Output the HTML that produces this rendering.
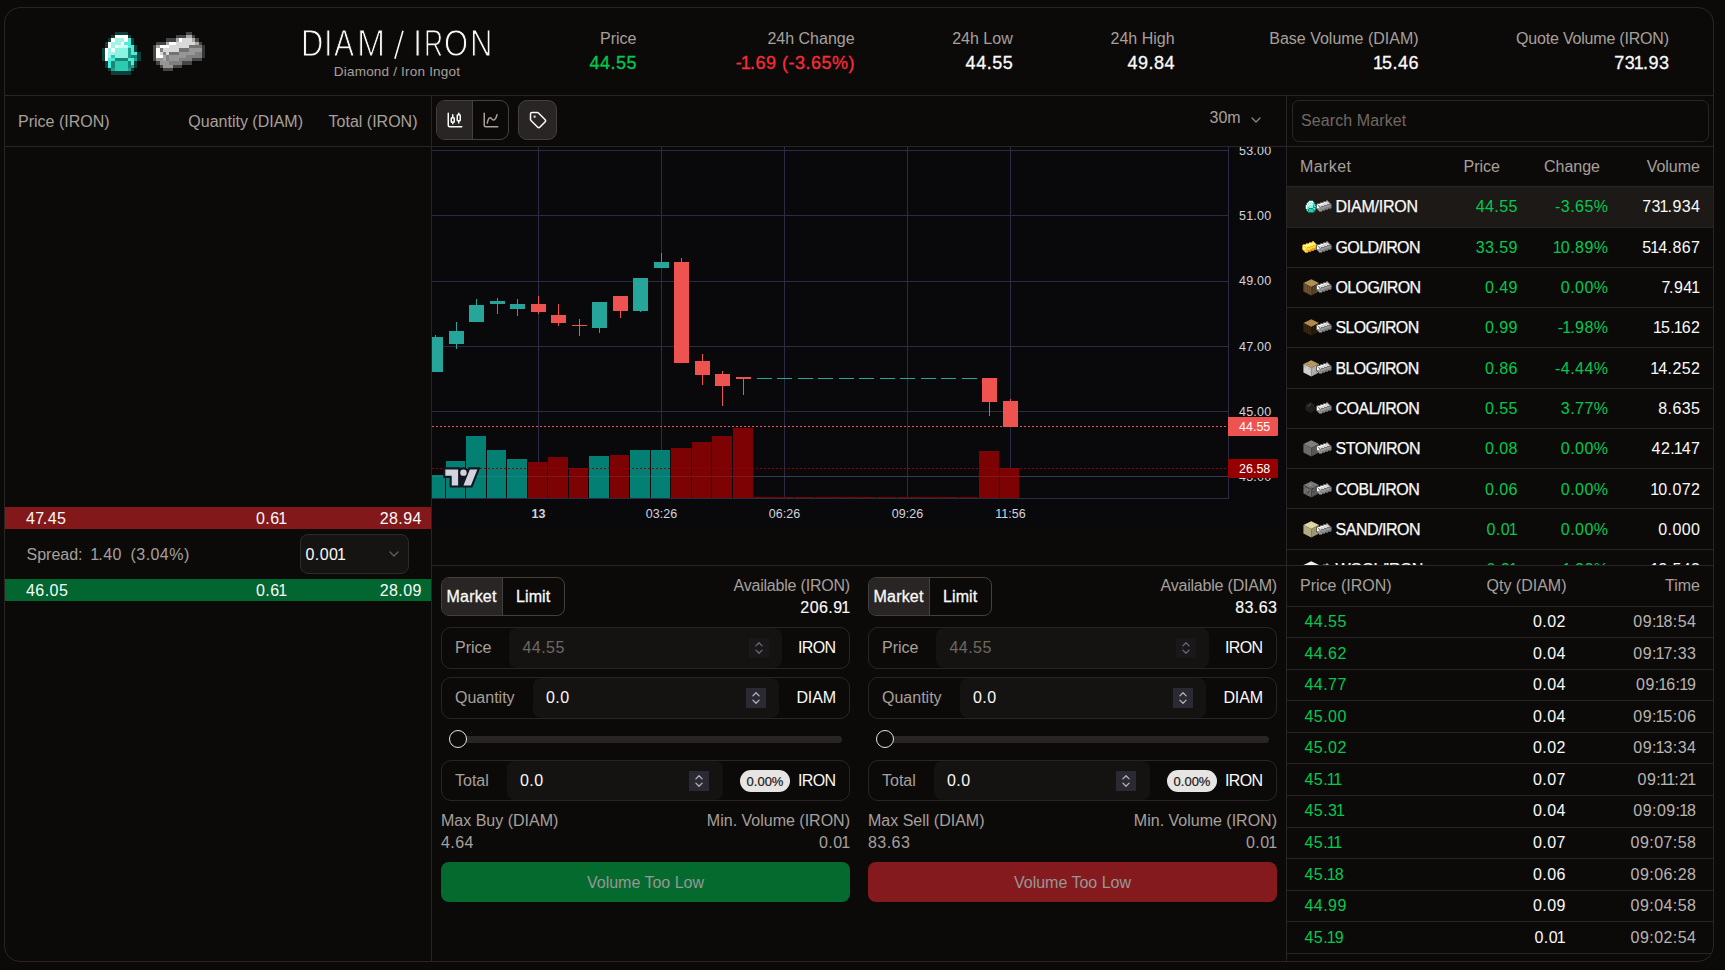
<!DOCTYPE html><html><head><meta charset="utf-8"><title>DIAM / IRON</title><style>
*{box-sizing:border-box}
html,body{margin:0;padding:0}
body{width:1725px;height:970px;overflow:hidden;background:#0c0a09;font-family:"Liberation Sans",sans-serif;color:#fafaf9;position:relative}
.b{position:absolute;display:block}
.t{position:absolute;white-space:nowrap;line-height:20px;height:20px}
.hl{position:absolute;height:1px;background:#292524}
.vl{position:absolute;width:1px;background:#292524}
.n1{margin:0 -1.4px}
.n7d{margin-right:-1.9px}
</style></head><body><div class="b" style="left:4px;top:7px;width:1710px;height:955px;border:1px solid #292524;border-radius:16px;"></div><div class="hl" style="left:5px;top:95px;width:1708px"></div><div class="hl" style="left:5px;top:146px;width:1708px"></div><div class="vl" style="left:431px;top:96px;height:865px"></div><div class="vl" style="left:1286px;top:96px;height:865px"></div><div class="hl" style="left:432px;top:565px;width:1281px"></div><svg class="b" style="left:94.6px;top:25px" width="52" height="53" viewBox="0 0 16 16" preserveAspectRatio="none" shape-rendering="crispEdges"><filter id="fd" x="-10%" y="-10%" width="120%" height="120%"><feGaussianBlur stdDeviation="0.14"/></filter><g filter="url(#fd)"><rect x="6" y="2" width="4" height="1" fill="#0e3f3a"/><rect x="5" y="3" width="1" height="1" fill="#0e3f3a"/><rect x="6" y="3" width="4" height="1" fill="#ffffff"/><rect x="10" y="3" width="1" height="1" fill="#0e3f3a"/><rect x="4" y="4" width="1" height="1" fill="#0e3f3a"/><rect x="5" y="4" width="1" height="1" fill="#ffffff"/><rect x="6" y="4" width="3" height="1" fill="#a1f3e6"/><rect x="9" y="4" width="1" height="1" fill="#ffffff"/><rect x="10" y="4" width="1" height="1" fill="#4aedd9"/><rect x="11" y="4" width="1" height="1" fill="#0e3f3a"/><rect x="3" y="5" width="1" height="1" fill="#0e3f3a"/><rect x="4" y="5" width="1" height="1" fill="#ffffff"/><rect x="5" y="5" width="3" height="1" fill="#a1f3e6"/><rect x="8" y="5" width="1" height="1" fill="#ffffff"/><rect x="9" y="5" width="2" height="1" fill="#4aedd9"/><rect x="11" y="5" width="1" height="1" fill="#0e3f3a"/><rect x="3" y="6" width="1" height="1" fill="#0e3f3a"/><rect x="4" y="6" width="1" height="1" fill="#ffffff"/><rect x="5" y="6" width="1" height="1" fill="#a1f3e6"/><rect x="6" y="6" width="1" height="1" fill="#ffffff"/><rect x="7" y="6" width="3" height="1" fill="#d2fbf4"/><rect x="10" y="6" width="2" height="1" fill="#4aedd9"/><rect x="12" y="6" width="1" height="1" fill="#0e3f3a"/><rect x="2" y="7" width="1" height="1" fill="#0e3f3a"/><rect x="3" y="7" width="1" height="1" fill="#ffffff"/><rect x="4" y="7" width="1" height="1" fill="#a1f3e6"/><rect x="5" y="7" width="1" height="1" fill="#ffffff"/><rect x="6" y="7" width="4" height="1" fill="#8cf4e2"/><rect x="10" y="7" width="1" height="1" fill="#239f8a"/><rect x="11" y="7" width="1" height="1" fill="#4aedd9"/><rect x="12" y="7" width="1" height="1" fill="#0e3f3a"/><rect x="2" y="8" width="1" height="1" fill="#0e3f3a"/><rect x="3" y="8" width="1" height="1" fill="#ffffff"/><rect x="4" y="8" width="2" height="1" fill="#a1f3e6"/><rect x="6" y="8" width="4" height="1" fill="#8cf4e2"/><rect x="10" y="8" width="1" height="1" fill="#239f8a"/><rect x="11" y="8" width="2" height="1" fill="#4aedd9"/><rect x="13" y="8" width="1" height="1" fill="#0e3f3a"/><rect x="2" y="9" width="1" height="1" fill="#0e3f3a"/><rect x="3" y="9" width="1" height="1" fill="#ffffff"/><rect x="4" y="9" width="1" height="1" fill="#a1f3e6"/><rect x="5" y="9" width="1" height="1" fill="#2ccbb0"/><rect x="6" y="9" width="4" height="1" fill="#8cf4e2"/><rect x="10" y="9" width="1" height="1" fill="#239f8a"/><rect x="11" y="9" width="2" height="1" fill="#1f8573"/><rect x="13" y="9" width="1" height="1" fill="#0e3f3a"/><rect x="2" y="10" width="1" height="1" fill="#0e3f3a"/><rect x="3" y="10" width="1" height="1" fill="#ffffff"/><rect x="4" y="10" width="2" height="1" fill="#4aedd9"/><rect x="6" y="10" width="4" height="1" fill="#1f8573"/><rect x="10" y="10" width="2" height="1" fill="#4aedd9"/><rect x="12" y="10" width="1" height="1" fill="#239f8a"/><rect x="13" y="10" width="1" height="1" fill="#0e3f3a"/><rect x="3" y="11" width="1" height="1" fill="#0e3f3a"/><rect x="4" y="11" width="1" height="1" fill="#4aedd9"/><rect x="5" y="11" width="1" height="1" fill="#1f8573"/><rect x="6" y="11" width="4" height="1" fill="#2ccbb0"/><rect x="10" y="11" width="1" height="1" fill="#1f8573"/><rect x="11" y="11" width="1" height="1" fill="#4aedd9"/><rect x="12" y="11" width="1" height="1" fill="#0e3f3a"/><rect x="3" y="12" width="1" height="1" fill="#0e3f3a"/><rect x="4" y="12" width="1" height="1" fill="#4aedd9"/><rect x="5" y="12" width="1" height="1" fill="#1f8573"/><rect x="6" y="12" width="4" height="1" fill="#2ccbb0"/><rect x="10" y="12" width="1" height="1" fill="#1f8573"/><rect x="11" y="12" width="1" height="1" fill="#239f8a"/><rect x="12" y="12" width="1" height="1" fill="#0e3f3a"/><rect x="4" y="13" width="1" height="1" fill="#0e3f3a"/><rect x="5" y="13" width="1" height="1" fill="#239f8a"/><rect x="6" y="13" width="4" height="1" fill="#2ccbb0"/><rect x="10" y="13" width="1" height="1" fill="#239f8a"/><rect x="11" y="13" width="1" height="1" fill="#0e3f3a"/><rect x="5" y="14" width="6" height="1" fill="#0e3f3a"/></g></svg><svg class="b" style="left:153px;top:25px" width="52" height="53" viewBox="0 0 16 16" preserveAspectRatio="none" shape-rendering="crispEdges"><filter id="fi" x="-10%" y="-10%" width="120%" height="120%"><feGaussianBlur stdDeviation="0.14"/></filter><g filter="url(#fi)"><rect x="10" y="2" width="2" height="1" fill="#444444"/><rect x="7" y="3" width="3" height="1" fill="#444444"/><rect x="10" y="3" width="2" height="1" fill="#a8a8a8"/><rect x="12" y="3" width="1" height="1" fill="#444444"/><rect x="4" y="4" width="3" height="1" fill="#444444"/><rect x="7" y="4" width="1" height="1" fill="#a8a8a8"/><rect x="8" y="4" width="1" height="1" fill="#ffffff"/><rect x="9" y="4" width="3" height="1" fill="#d8d8d8"/><rect x="12" y="4" width="1" height="1" fill="#a8a8a8"/><rect x="13" y="4" width="1" height="1" fill="#444444"/><rect x="1" y="5" width="3" height="1" fill="#444444"/><rect x="4" y="5" width="1" height="1" fill="#a8a8a8"/><rect x="5" y="5" width="2" height="1" fill="#ffffff"/><rect x="7" y="5" width="6" height="1" fill="#d8d8d8"/><rect x="13" y="5" width="1" height="1" fill="#a8a8a8"/><rect x="14" y="5" width="1" height="1" fill="#444444"/><rect x="0" y="6" width="1" height="1" fill="#444444"/><rect x="1" y="6" width="1" height="1" fill="#a8a8a8"/><rect x="2" y="6" width="3" height="1" fill="#ffffff"/><rect x="5" y="6" width="6" height="1" fill="#d8d8d8"/><rect x="11" y="6" width="4" height="1" fill="#727272"/><rect x="15" y="6" width="1" height="1" fill="#353535"/><rect x="0" y="7" width="1" height="1" fill="#444444"/><rect x="1" y="7" width="1" height="1" fill="#ffffff"/><rect x="2" y="7" width="1" height="1" fill="#828282"/><rect x="3" y="7" width="5" height="1" fill="#d8d8d8"/><rect x="8" y="7" width="3" height="1" fill="#727272"/><rect x="11" y="7" width="4" height="1" fill="#969696"/><rect x="15" y="7" width="1" height="1" fill="#353535"/><rect x="0" y="8" width="1" height="1" fill="#444444"/><rect x="1" y="8" width="1" height="1" fill="#ffffff"/><rect x="2" y="8" width="1" height="1" fill="#d8d8d8"/><rect x="3" y="8" width="1" height="1" fill="#828282"/><rect x="4" y="8" width="1" height="1" fill="#d8d8d8"/><rect x="5" y="8" width="3" height="1" fill="#727272"/><rect x="8" y="8" width="5" height="1" fill="#969696"/><rect x="13" y="8" width="2" height="1" fill="#7f7f7f"/><rect x="15" y="8" width="1" height="1" fill="#353535"/><rect x="0" y="9" width="1" height="1" fill="#444444"/><rect x="1" y="9" width="2" height="1" fill="#ffffff"/><rect x="3" y="9" width="1" height="1" fill="#a8a8a8"/><rect x="4" y="9" width="1" height="1" fill="#828282"/><rect x="5" y="9" width="5" height="1" fill="#969696"/><rect x="10" y="9" width="5" height="1" fill="#7f7f7f"/><rect x="15" y="9" width="1" height="1" fill="#353535"/><rect x="0" y="10" width="1" height="1" fill="#444444"/><rect x="1" y="10" width="2" height="1" fill="#969696"/><rect x="3" y="10" width="1" height="1" fill="#a8a8a8"/><rect x="4" y="10" width="1" height="1" fill="#828282"/><rect x="5" y="10" width="3" height="1" fill="#969696"/><rect x="8" y="10" width="4" height="1" fill="#7f7f7f"/><rect x="12" y="10" width="3" height="1" fill="#444444"/><rect x="1" y="11" width="1" height="1" fill="#444444"/><rect x="2" y="11" width="3" height="1" fill="#969696"/><rect x="5" y="11" width="4" height="1" fill="#7f7f7f"/><rect x="9" y="11" width="3" height="1" fill="#444444"/><rect x="2" y="12" width="1" height="1" fill="#444444"/><rect x="3" y="12" width="3" height="1" fill="#969696"/><rect x="6" y="12" width="3" height="1" fill="#444444"/><rect x="3" y="13" width="3" height="1" fill="#444444"/></g></svg><div class="t" style="left:301.3px;top:33.6px;font-size:36.5px;color:#fafaf9;transform-origin:0 50%;transform:scaleX(0.848);-webkit-text-stroke:1.1px #0c0a09;">D</div><div class="t" style="left:324.37px;top:33.6px;font-size:36.5px;color:#fafaf9;transform-origin:0 50%;transform:scaleX(0.85);-webkit-text-stroke:1.1px #0c0a09;">I</div><div class="t" style="left:334.29px;top:33.6px;font-size:36.5px;color:#fafaf9;transform-origin:0 50%;transform:scaleX(0.823);-webkit-text-stroke:1.1px #0c0a09;">A</div><div class="t" style="left:356.82px;top:33.6px;font-size:36.5px;color:#fafaf9;transform-origin:0 50%;transform:scaleX(0.926);-webkit-text-stroke:1.1px #0c0a09;">M</div><div class="t" style="left:412.67px;top:33.6px;font-size:36.5px;color:#fafaf9;transform-origin:0 50%;transform:scaleX(0.9);-webkit-text-stroke:1.1px #0c0a09;">I</div><div class="t" style="left:424.34px;top:33.6px;font-size:36.5px;color:#fafaf9;transform-origin:0 50%;transform:scaleX(0.724);-webkit-text-stroke:1.1px #0c0a09;">R</div><div class="t" style="left:443.97px;top:33.6px;font-size:36.5px;color:#fafaf9;transform-origin:0 50%;transform:scaleX(0.848);-webkit-text-stroke:1.1px #0c0a09;">O</div><div class="t" style="left:469.7px;top:33.6px;font-size:36.5px;color:#fafaf9;transform-origin:0 50%;transform:scaleX(0.85);-webkit-text-stroke:1.1px #0c0a09;">N</div><svg class="b" style="left:390px;top:26px" width="20" height="38" viewBox="390 26 20 38"><line x1="394.9" y1="58.7" x2="403.0" y2="30.8" stroke="#fafaf9" stroke-width="1.55"/></svg><div class="t" style="top:62px;font-size:13.5px;color:#a6a09b;left:397px;transform:translateX(-50%);letter-spacing:0.2px;">Diamond / Iron Ingot</div><div class="t" style="top:29px;font-size:16px;color:#a6a09b;right:1088.5px;">Price</div><div class="t" style="top:53px;font-size:18px;color:#00c950;right:1087.99px;-webkit-text-stroke:0.3px #00c950;letter-spacing:0.51px;">44.55</div><div class="t" style="top:29px;font-size:16px;color:#a6a09b;right:870.4px;">24h Change</div><div class="t" style="top:53px;font-size:18px;color:#fb2c36;right:869.89px;-webkit-text-stroke:0.3px #fb2c36;letter-spacing:0.51px;">-<span class="n1">1</span>.69 (-3.65%)</div><div class="t" style="top:29px;font-size:16px;color:#a6a09b;right:712.3px;">24h Low</div><div class="t" style="top:53px;font-size:18px;color:#fafaf9;right:711.79px;-webkit-text-stroke:0.3px #fafaf9;letter-spacing:0.51px;">44.55</div><div class="t" style="top:29px;font-size:16px;color:#a6a09b;right:550.4px;">24h High</div><div class="t" style="top:53px;font-size:18px;color:#fafaf9;right:549.89px;-webkit-text-stroke:0.3px #fafaf9;letter-spacing:0.51px;">49.84</div><div class="t" style="top:29px;font-size:16px;color:#a6a09b;right:306.4px;">Base Volume (DIAM)</div><div class="t" style="top:53px;font-size:18px;color:#fafaf9;right:305.89px;-webkit-text-stroke:0.3px #fafaf9;letter-spacing:0.51px;"><span class="n1">1</span>5.46</div><div class="t" style="top:29px;font-size:16px;color:#a6a09b;right:56.2px;letter-spacing:-0.2px;">Quote Volume (IRON)</div><div class="t" style="top:53px;font-size:18px;color:#fafaf9;right:55.49px;-webkit-text-stroke:0.3px #fafaf9;letter-spacing:0.51px;">73<span class="n1">1</span>.93</div><div class="t" style="top:112px;font-size:16px;color:#a6a09b;left:18px;">Price (IRON)</div><div class="t" style="top:112px;font-size:16px;color:#a6a09b;right:1422px;">Quantity (DIAM)</div><div class="t" style="top:112px;font-size:16px;color:#a6a09b;right:1307.5px;">Total (IRON)</div><div class="b" style="left:5px;top:507px;width:426px;height:22px;background:#82181a"></div><div class="t" style="top:509px;font-size:16px;color:#fafaf9;left:26px;letter-spacing:0.45px;">4<span class="n7d">7</span>.45</div><div class="t" style="top:509px;font-size:16px;color:#fafaf9;right:1438.85px;letter-spacing:0.45px;">0.6<span class="n1">1</span></div><div class="t" style="top:509px;font-size:16px;color:#fafaf9;right:1303.05px;letter-spacing:0.45px;">28.94</div><div class="t" style="top:545px;font-size:16px;color:#a6a09b;left:26.5px;">Spread:</div><div class="t" style="top:545px;font-size:16px;color:#a6a09b;left:91.7px;letter-spacing:0.45px;"><span class="n1">1</span>.40</div><div class="t" style="top:545px;font-size:16px;color:#a6a09b;left:130.5px;letter-spacing:0.45px;">(3.04%)</div><div class="b" style="left:300px;top:534px;width:109px;height:40px;border:1px solid #2e2a28;border-radius:8px;background:#161412"></div><div class="t" style="top:545px;font-size:16px;color:#fafaf9;left:305.5px;letter-spacing:0.45px;">0.00<span class="n1">1</span></div><svg class="b" style="left:386px;top:546px;opacity:.5" width="16" height="16" viewBox="0 0 24 24" fill="none" stroke="#a6a09b" stroke-width="2" stroke-linecap="round" stroke-linejoin="round"><path d="m6 9 6 6 6-6"/></svg><div class="b" style="left:5px;top:579px;width:426px;height:22px;background:#016630"></div><div class="t" style="top:581px;font-size:16px;color:#fafaf9;left:26px;letter-spacing:0.45px;">46.05</div><div class="t" style="top:581px;font-size:16px;color:#fafaf9;right:1438.85px;letter-spacing:0.45px;">0.6<span class="n1">1</span></div><div class="t" style="top:581px;font-size:16px;color:#fafaf9;right:1303.05px;letter-spacing:0.45px;">28.09</div><div class="b" style="left:436px;top:100px;width:73px;height:40px;border:1px solid #44403b;border-radius:9px;overflow:hidden"></div><div class="b" style="left:437px;top:101px;width:36px;height:38px;background:#292524;border-radius:8px 0 0 8px"></div><div class="vl" style="left:472px;top:101px;height:38px;background:#44403b"></div><svg class="b" style="left:445.5px;top:111px" width="18" height="18" viewBox="0 0 24 24" fill="none" stroke="#fafaf9" stroke-width="2" stroke-linecap="round" stroke-linejoin="round"><path d="M9 5v4"/><rect width="4" height="6" x="7" y="9" rx="1"/><path d="M9 15v2"/><path d="M17 3v2"/><rect width="4" height="8" x="15" y="5" rx="1"/><path d="M17 13v3"/><path d="M3 3v16a2 2 0 0 0 2 2h16"/></svg><svg class="b" style="left:481.5px;top:111px" width="18" height="18" viewBox="0 0 24 24" fill="none" stroke="#a6a09b" stroke-width="2" stroke-linecap="round" stroke-linejoin="round"><path d="M3 3v16a2 2 0 0 0 2 2h16"/><path d="M7 16c.5-2 1.500-7 4-7 2 0 2 3 4 3 2.500 0 4.500-5 5-7"/></svg><div class="b" style="left:518px;top:100px;width:39px;height:40px;border:1px solid #44403b;border-radius:9px;background:#292524"></div><svg class="b" style="left:528.8px;top:111px" width="18" height="18" viewBox="0 0 24 24" fill="none" stroke="#fafaf9" stroke-width="2" stroke-linecap="round" stroke-linejoin="round"><path d="M12.586 2.586A2 2 0 0 0 11.172 2H4a2 2 0 0 0-2 2v7.172a2 2 0 0 0 .586 1.414l8.704 8.704a2.426 2.426 0 0 0 3.420 0l6.580-6.580a2.426 2.426 0 0 0 0-3.420z"/><circle cx="7.500" cy="7.500" r=".5" fill="#fafaf9"/></svg><div class="t" style="top:108px;font-size:16px;color:#a6a09b;left:1209.5px;">30m</div><svg class="b" style="left:1248px;top:112px;opacity:.8" width="16" height="16" viewBox="0 0 24 24" fill="none" stroke="#a6a09b" stroke-width="2" stroke-linecap="round" stroke-linejoin="round"><path d="m6 9 6 6 6-6"/></svg><svg class="b" style="left:432px;top:147px" width="854" height="381" viewBox="432 147 854 381" shape-rendering="crispEdges"><rect x="432" y="147" width="854" height="381" fill="#09090b"/><rect x="432" y="150" width="796" height="1" fill="#2b2b43"/><rect x="432" y="215" width="796" height="1" fill="#2b2b43"/><rect x="432" y="281" width="796" height="1" fill="#2b2b43"/><rect x="432" y="346" width="796" height="1" fill="#2b2b43"/><rect x="432" y="411" width="796" height="1" fill="#2b2b43"/><rect x="432" y="476" width="796" height="1" fill="#2b2b43"/><rect x="538" y="147" width="1" height="351" fill="#2b2b43"/><rect x="661" y="147" width="1" height="351" fill="#2b2b43"/><rect x="784" y="147" width="1" height="351" fill="#2b2b43"/><rect x="907" y="147" width="1" height="351" fill="#2b2b43"/><rect x="1010" y="147" width="1" height="351" fill="#2b2b43"/><rect x="432" y="475" width="13" height="23" fill="#037f73"/><rect x="446" y="461" width="19" height="37" fill="#037f73"/><rect x="466" y="436" width="20" height="62" fill="#037f73"/><rect x="487" y="450" width="19" height="48" fill="#037f73"/><rect x="507" y="459" width="20" height="39" fill="#037f73"/><rect x="528" y="462" width="19" height="36" fill="#7c0204"/><rect x="548" y="457" width="20" height="41" fill="#7c0204"/><rect x="569" y="468" width="19" height="30" fill="#7c0204"/><rect x="589" y="456" width="20" height="42" fill="#037f73"/><rect x="610" y="455" width="19" height="43" fill="#7c0204"/><rect x="630" y="450" width="20" height="48" fill="#037f73"/><rect x="651" y="450" width="19" height="48" fill="#037f73"/><rect x="671" y="448" width="20" height="50" fill="#7c0204"/><rect x="692" y="442" width="19" height="56" fill="#7c0204"/><rect x="712" y="436" width="20" height="62" fill="#7c0204"/><rect x="733" y="428" width="20" height="70" fill="#7c0204"/><rect x="979" y="451" width="20" height="47" fill="#7c0204"/><rect x="1000" y="468" width="19" height="30" fill="#7c0204"/><rect x="754" y="497" width="19" height="1" fill="#7c0204"/><rect x="774" y="497" width="20" height="1" fill="#7c0204"/><rect x="795" y="497" width="19" height="1" fill="#7c0204"/><rect x="815" y="497" width="20" height="1" fill="#7c0204"/><rect x="836" y="497" width="19" height="1" fill="#7c0204"/><rect x="856" y="497" width="20" height="1" fill="#7c0204"/><rect x="877" y="497" width="19" height="1" fill="#7c0204"/><rect x="897" y="497" width="20" height="1" fill="#7c0204"/><rect x="918" y="497" width="19" height="1" fill="#7c0204"/><rect x="938" y="497" width="20" height="1" fill="#7c0204"/><rect x="959" y="497" width="19" height="1" fill="#7c0204"/><rect x="432" y="476" width="796" height="1" fill="#ffffff" opacity="0.07"/><rect x="435" y="335" width="1" height="37" fill="#26a69a"/><rect x="432" y="337" width="11" height="35" fill="#26a69a"/><rect x="456" y="322" width="1" height="27" fill="#26a69a"/><rect x="449" y="331" width="15" height="13" fill="#26a69a"/><rect x="476" y="299" width="1" height="23" fill="#26a69a"/><rect x="469" y="305" width="15" height="17" fill="#26a69a"/><rect x="497" y="298" width="1" height="16" fill="#26a69a"/><rect x="490" y="301" width="15" height="3" fill="#26a69a"/><rect x="517" y="299" width="1" height="17" fill="#26a69a"/><rect x="510" y="304" width="15" height="5" fill="#26a69a"/><rect x="538" y="296" width="1" height="18" fill="#ef5350"/><rect x="531" y="304" width="15" height="8" fill="#ef5350"/><rect x="558" y="304" width="1" height="22" fill="#ef5350"/><rect x="551" y="315" width="15" height="8" fill="#ef5350"/><rect x="579" y="319" width="1" height="17" fill="#ef5350"/><rect x="572" y="325" width="15" height="1" fill="#ef5350"/><rect x="599" y="302" width="1" height="31" fill="#26a69a"/><rect x="592" y="302" width="15" height="26" fill="#26a69a"/><rect x="620" y="296" width="1" height="22" fill="#ef5350"/><rect x="613" y="296" width="15" height="15" fill="#ef5350"/><rect x="640" y="278" width="1" height="34" fill="#26a69a"/><rect x="633" y="278" width="15" height="33" fill="#26a69a"/><rect x="661" y="253" width="1" height="15" fill="#26a69a"/><rect x="654" y="262" width="15" height="6" fill="#26a69a"/><rect x="681" y="258" width="1" height="105" fill="#ef5350"/><rect x="674" y="262" width="15" height="101" fill="#ef5350"/><rect x="702" y="354" width="1" height="31" fill="#ef5350"/><rect x="695" y="361" width="15" height="14" fill="#ef5350"/><rect x="722" y="371" width="1" height="35" fill="#ef5350"/><rect x="715" y="374" width="15" height="12" fill="#ef5350"/><rect x="743" y="377" width="1" height="18" fill="#ef5350"/><rect x="736" y="377" width="15" height="2" fill="#ef5350"/><rect x="989" y="378" width="1" height="38" fill="#ef5350"/><rect x="982" y="378" width="15" height="24" fill="#ef5350"/><rect x="1010" y="399" width="1" height="28" fill="#ef5350"/><rect x="1003" y="401" width="15" height="26" fill="#ef5350"/><rect x="757" y="378" width="15" height="1" fill="#26a69a"/><rect x="777" y="378" width="15" height="1" fill="#26a69a"/><rect x="798" y="378" width="15" height="1" fill="#26a69a"/><rect x="818" y="378" width="15" height="1" fill="#26a69a"/><rect x="839" y="378" width="15" height="1" fill="#26a69a"/><rect x="859" y="378" width="15" height="1" fill="#26a69a"/><rect x="880" y="378" width="15" height="1" fill="#26a69a"/><rect x="900" y="378" width="15" height="1" fill="#26a69a"/><rect x="921" y="378" width="15" height="1" fill="#26a69a"/><rect x="941" y="378" width="15" height="1" fill="#26a69a"/><rect x="962" y="378" width="15" height="1" fill="#26a69a"/><line x1="432" y1="426.5" x2="1228" y2="426.5" stroke="#ef5350" stroke-width="1" stroke-dasharray="2 2"/><line x1="432" y1="468.5" x2="1228" y2="468.5" stroke="#960000" stroke-width="1" stroke-dasharray="2 2"/><rect x="1228" y="147" width="1" height="352" fill="#2b2b43"/><rect x="432" y="498" width="797" height="1" fill="#2b2b43"/><g shape-rendering="geometricPrecision"><path d="M1228 417h48a2 2 0 0 1 2 2v15a2 2 0 0 1-2 2h-48z" fill="#ef5350"/><path d="M1228 459h48a2 2 0 0 1 2 2v15a2 2 0 0 1-2 2h-48z" fill="#960000"/><g transform="translate(443.2,467.3) scale(1.066)"><path fill="#131722" d="M2 0H0v10h6v9h21.4l.5-1.3 6-15 1-2.700H23.700l-.5 1.300-.2.600a5 5 0 0 0-7-.9V0H2Z"/><path fill="#d1d4dc" d="M14 2H2v6h6v9h6V2Zm12 15h-7l6-15h7l-6 15Zm-7-9a3 3 0 1 0 0-6 3 3 0 0 0 0 6Z"/></g></g></svg><div class="b" style="left:1229px;top:147px;width:57px;height:351px;overflow:hidden"><div class="t" style="left:10px;top:-6px;font-size:12.5px;letter-spacing:0.2px;color:#d1d4dc">53.00</div><div class="t" style="left:10px;top:59px;font-size:12.5px;letter-spacing:0.2px;color:#d1d4dc">51.00</div><div class="t" style="left:10px;top:124px;font-size:12.5px;letter-spacing:0.2px;color:#d1d4dc">49.00</div><div class="t" style="left:10px;top:190px;font-size:12.5px;letter-spacing:0.2px;color:#d1d4dc">47.00</div><div class="t" style="left:10px;top:255px;font-size:12.5px;letter-spacing:0.2px;color:#d1d4dc">45.00</div><div class="t" style="left:10px;top:320px;font-size:12.5px;letter-spacing:0.2px;color:#d1d4dc">43.00</div></div><div class="b" style="left:1228px;top:417px;width:50px;height:19px;background:#ef5350;border-radius:0 2px 2px 0"></div><div class="b" style="left:1228px;top:459px;width:50px;height:19px;background:#960000;border-radius:0 2px 2px 0"></div><div class="t" style="left:1239px;top:417px;font-size:12.5px;color:#fff">44.55</div><div class="t" style="left:1239px;top:459px;font-size:12.5px;color:#fff">26.58</div><div class="t" style="top:504px;font-size:12.5px;color:#d1d4dc;font-weight:700;left:538.5px;transform:translateX(-50%);">13</div><div class="t" style="top:504px;font-size:12.5px;color:#d1d4dc;left:661.5px;transform:translateX(-50%);">03:26</div><div class="t" style="top:504px;font-size:12.5px;color:#d1d4dc;left:784.5px;transform:translateX(-50%);">06:26</div><div class="t" style="top:504px;font-size:12.5px;color:#d1d4dc;left:907.5px;transform:translateX(-50%);">09:26</div><div class="t" style="top:504px;font-size:12.5px;color:#d1d4dc;left:1010.5px;transform:translateX(-50%);">11:56</div><div class="b" style="left:441px;top:577px;width:124px;height:39px;border:1px solid #44403b;border-radius:8px"></div><div class="b" style="left:442px;top:578px;width:61px;height:37px;background:#292524;border-radius:7px 0 0 7px"></div><div class="vl" style="left:502px;top:578px;height:37px;background:#44403b"></div><div class="t" style="top:587px;font-size:16px;color:#fafaf9;left:446.5px;-webkit-text-stroke:0.3px #fafaf9;letter-spacing:0.2px;">Market</div><div class="t" style="top:587px;font-size:16px;color:#fafaf9;left:516px;-webkit-text-stroke:0.3px #fafaf9;letter-spacing:0.1px;">Limit</div><div class="t" style="top:576px;font-size:16px;color:#a6a09b;right:875px;letter-spacing:-0.2px;">Available (IRON)</div><div class="t" style="top:598px;font-size:16px;color:#fafaf9;right:875.85px;-webkit-text-stroke:0.15px #fafaf9;letter-spacing:0.45px;">206.9<span class="n1">1</span></div><div class="b" style="left:441px;top:627px;width:409px;height:42px;border:1px solid #292524;border-radius:10px;"></div><div class="b" style="left:509px;top:628px;width:273px;height:40px;background:#151311;border-radius:8px;"></div><div class="t" style="top:638px;font-size:16px;color:#a6a09b;left:455px;">Price</div><div class="t" style="top:638px;font-size:16px;color:#6e6863;left:522.5px;letter-spacing:0.45px;">44.55</div><svg class="b" style="left:749px;top:638px" width="20" height="20" viewBox="0 0 20 20"><rect width="20" height="20" fill="#1a181b"/><path d="M6.900 7.900 10 4.800 13.100 7.900M6.900 12.100 10 15.200 13.100 12.100" fill="none" stroke="#6b6870" stroke-width="1.3" stroke-linecap="round" stroke-linejoin="round"/></svg><div class="t" style="top:638px;font-size:16px;color:#fafaf9;right:889.7px;letter-spacing:-0.7px;">IRON</div><div class="b" style="left:441px;top:677px;width:409px;height:42px;border:1px solid #292524;border-radius:10px;"></div><div class="b" style="left:533px;top:678px;width:246px;height:40px;background:#151311;border-radius:8px;"></div><div class="t" style="top:688px;font-size:16px;color:#a6a09b;left:455px;">Quantity</div><div class="t" style="top:688px;font-size:16px;color:#fafaf9;left:546px;letter-spacing:0.45px;">0.0</div><svg class="b" style="left:746px;top:688px" width="20" height="20" viewBox="0 0 20 20"><rect width="20" height="20" fill="#2b2a33"/><path d="M6.900 7.900 10 4.800 13.100 7.900M6.900 12.100 10 15.200 13.100 12.100" fill="none" stroke="#b4b3bb" stroke-width="1.3" stroke-linecap="round" stroke-linejoin="round"/></svg><div class="t" style="top:688px;font-size:16px;color:#fafaf9;right:889px;letter-spacing:-0.1px;">DIAM</div><div class="b" style="left:449px;top:736px;width:393px;height:7px;background:#292524;border-radius:4px"></div><div class="b" style="left:449px;top:730.3px;width:18px;height:18px;border:1px solid #e7e5e4;border-radius:50%;background:#0c0a09"></div><div class="b" style="left:441px;top:760px;width:409px;height:41px;border:1px solid #292524;border-radius:10px;"></div><div class="b" style="left:507px;top:761px;width:216px;height:39px;background:#151311;border-radius:8px;"></div><div class="t" style="top:771px;font-size:16px;color:#a6a09b;left:455px;">Total</div><div class="t" style="top:771px;font-size:16px;color:#fafaf9;left:520px;letter-spacing:0.45px;">0.0</div><svg class="b" style="left:689px;top:771px" width="20" height="20" viewBox="0 0 20 20"><rect width="20" height="20" fill="#2b2a33"/><path d="M6.900 7.900 10 4.800 13.100 7.900M6.900 12.100 10 15.200 13.100 12.100" fill="none" stroke="#b4b3bb" stroke-width="1.3" stroke-linecap="round" stroke-linejoin="round"/></svg><div class="b" style="left:740px;top:770px;width:50px;height:22px;background:#e7e5e4;border-radius:11px"></div><div class="t" style="top:772px;font-size:13px;color:#1c1917;left:765px;transform:translateX(-50%);-webkit-text-stroke:0.2px #1c1917;">0.00%</div><div class="t" style="top:771px;font-size:16px;color:#fafaf9;right:889.7px;letter-spacing:-0.7px;">IRON</div><div class="t" style="top:811px;font-size:16px;color:#a6a09b;left:441px;">Max Buy (DIAM)</div><div class="t" style="top:811px;font-size:16px;color:#a6a09b;right:875px;">Min. Volume (IRON)</div><div class="t" style="top:833px;font-size:16px;color:#a6a09b;left:441px;letter-spacing:0.45px;">4.64</div><div class="t" style="top:833px;font-size:16px;color:#a6a09b;right:875.85px;letter-spacing:0.45px;">0.0<span class="n1">1</span></div><div class="b" style="left:441px;top:862px;width:409px;height:40px;background:#056a2e;border-radius:8px"></div><div class="t" style="top:873px;font-size:16px;color:#979797;left:645.5px;transform:translateX(-50%);">Volume Too Low</div><div class="b" style="left:868px;top:577px;width:124px;height:39px;border:1px solid #44403b;border-radius:8px"></div><div class="b" style="left:869px;top:578px;width:61px;height:37px;background:#292524;border-radius:7px 0 0 7px"></div><div class="vl" style="left:929px;top:578px;height:37px;background:#44403b"></div><div class="t" style="top:587px;font-size:16px;color:#fafaf9;left:873.5px;-webkit-text-stroke:0.3px #fafaf9;letter-spacing:0.2px;">Market</div><div class="t" style="top:587px;font-size:16px;color:#fafaf9;left:943px;-webkit-text-stroke:0.3px #fafaf9;letter-spacing:0.1px;">Limit</div><div class="t" style="top:576px;font-size:16px;color:#a6a09b;right:448px;letter-spacing:-0.2px;">Available (DIAM)</div><div class="t" style="top:598px;font-size:16px;color:#fafaf9;right:447.55px;-webkit-text-stroke:0.15px #fafaf9;letter-spacing:0.45px;">83.63</div><div class="b" style="left:868px;top:627px;width:409px;height:42px;border:1px solid #292524;border-radius:10px;"></div><div class="b" style="left:936px;top:628px;width:273px;height:40px;background:#151311;border-radius:8px;"></div><div class="t" style="top:638px;font-size:16px;color:#a6a09b;left:882px;">Price</div><div class="t" style="top:638px;font-size:16px;color:#6e6863;left:949.5px;letter-spacing:0.45px;">44.55</div><svg class="b" style="left:1176px;top:638px" width="20" height="20" viewBox="0 0 20 20"><rect width="20" height="20" fill="#1a181b"/><path d="M6.900 7.900 10 4.800 13.100 7.900M6.900 12.100 10 15.200 13.100 12.100" fill="none" stroke="#6b6870" stroke-width="1.3" stroke-linecap="round" stroke-linejoin="round"/></svg><div class="t" style="top:638px;font-size:16px;color:#fafaf9;right:462.7px;letter-spacing:-0.7px;">IRON</div><div class="b" style="left:868px;top:677px;width:409px;height:42px;border:1px solid #292524;border-radius:10px;"></div><div class="b" style="left:960px;top:678px;width:246px;height:40px;background:#151311;border-radius:8px;"></div><div class="t" style="top:688px;font-size:16px;color:#a6a09b;left:882px;">Quantity</div><div class="t" style="top:688px;font-size:16px;color:#fafaf9;left:973px;letter-spacing:0.45px;">0.0</div><svg class="b" style="left:1173px;top:688px" width="20" height="20" viewBox="0 0 20 20"><rect width="20" height="20" fill="#2b2a33"/><path d="M6.900 7.900 10 4.800 13.100 7.900M6.900 12.100 10 15.200 13.100 12.100" fill="none" stroke="#b4b3bb" stroke-width="1.3" stroke-linecap="round" stroke-linejoin="round"/></svg><div class="t" style="top:688px;font-size:16px;color:#fafaf9;right:462px;letter-spacing:-0.1px;">DIAM</div><div class="b" style="left:876px;top:736px;width:393px;height:7px;background:#292524;border-radius:4px"></div><div class="b" style="left:876px;top:730.3px;width:18px;height:18px;border:1px solid #e7e5e4;border-radius:50%;background:#0c0a09"></div><div class="b" style="left:868px;top:760px;width:409px;height:41px;border:1px solid #292524;border-radius:10px;"></div><div class="b" style="left:934px;top:761px;width:216px;height:39px;background:#151311;border-radius:8px;"></div><div class="t" style="top:771px;font-size:16px;color:#a6a09b;left:882px;">Total</div><div class="t" style="top:771px;font-size:16px;color:#fafaf9;left:947px;letter-spacing:0.45px;">0.0</div><svg class="b" style="left:1116px;top:771px" width="20" height="20" viewBox="0 0 20 20"><rect width="20" height="20" fill="#2b2a33"/><path d="M6.900 7.900 10 4.800 13.100 7.900M6.900 12.100 10 15.200 13.100 12.100" fill="none" stroke="#b4b3bb" stroke-width="1.3" stroke-linecap="round" stroke-linejoin="round"/></svg><div class="b" style="left:1167px;top:770px;width:50px;height:22px;background:#e7e5e4;border-radius:11px"></div><div class="t" style="top:772px;font-size:13px;color:#1c1917;left:1192px;transform:translateX(-50%);-webkit-text-stroke:0.2px #1c1917;">0.00%</div><div class="t" style="top:771px;font-size:16px;color:#fafaf9;right:462.7px;letter-spacing:-0.7px;">IRON</div><div class="t" style="top:811px;font-size:16px;color:#a6a09b;left:868px;">Max Sell (DIAM)</div><div class="t" style="top:811px;font-size:16px;color:#a6a09b;right:448px;">Min. Volume (IRON)</div><div class="t" style="top:833px;font-size:16px;color:#a6a09b;left:868px;letter-spacing:0.45px;">83.63</div><div class="t" style="top:833px;font-size:16px;color:#a6a09b;right:448.85px;letter-spacing:0.45px;">0.0<span class="n1">1</span></div><div class="b" style="left:868px;top:862px;width:409px;height:40px;background:#851a1e;border-radius:8px"></div><div class="t" style="top:873px;font-size:16px;color:#979797;left:1072.5px;transform:translateX(-50%);">Volume Too Low</div><div class="b" style="left:1292px;top:100px;width:417px;height:42px;border:1px solid #292524;border-radius:7px;"></div><div class="t" style="top:111px;font-size:16px;color:#6f6862;left:1301px;letter-spacing:0.1px;">Search Market</div><div class="t" style="top:157px;font-size:16px;color:#a6a09b;left:1300px;letter-spacing:0.4px;">Market</div><div class="t" style="top:157px;font-size:16px;color:#a6a09b;right:225px;">Price</div><div class="t" style="top:157px;font-size:16px;color:#a6a09b;right:125px;">Change</div><div class="t" style="top:157px;font-size:16px;color:#a6a09b;right:25px;">Volume</div><div class="b" style="left:1287px;top:147px;width:426px;height:418px;overflow:hidden"><div class="b" style="left:0;top:40px;width:426px;height:40px;background:#1c1917"></div><div class="hl" style="left:0;top:39px;width:426px"></div><svg class="b" style="left:16.3px;top:51.3px" width="16" height="16" viewBox="0 0 16 16" preserveAspectRatio="none" shape-rendering="crispEdges"><filter id="sd0" x="-10%" y="-10%" width="120%" height="120%"><feGaussianBlur stdDeviation="0.2"/></filter><g filter="url(#sd0)"><rect x="6" y="2" width="4" height="1" fill="#17695f"/><rect x="5" y="3" width="1" height="1" fill="#17695f"/><rect x="6" y="3" width="4" height="1" fill="#ffffff"/><rect x="10" y="3" width="1" height="1" fill="#17695f"/><rect x="4" y="4" width="1" height="1" fill="#17695f"/><rect x="5" y="4" width="1" height="1" fill="#ffffff"/><rect x="6" y="4" width="3" height="1" fill="#a1f3e6"/><rect x="9" y="4" width="1" height="1" fill="#ffffff"/><rect x="10" y="4" width="1" height="1" fill="#4aedd9"/><rect x="11" y="4" width="1" height="1" fill="#17695f"/><rect x="3" y="5" width="1" height="1" fill="#17695f"/><rect x="4" y="5" width="1" height="1" fill="#ffffff"/><rect x="5" y="5" width="3" height="1" fill="#a1f3e6"/><rect x="8" y="5" width="1" height="1" fill="#ffffff"/><rect x="9" y="5" width="2" height="1" fill="#4aedd9"/><rect x="11" y="5" width="1" height="1" fill="#17695f"/><rect x="3" y="6" width="1" height="1" fill="#17695f"/><rect x="4" y="6" width="1" height="1" fill="#ffffff"/><rect x="5" y="6" width="1" height="1" fill="#a1f3e6"/><rect x="6" y="6" width="1" height="1" fill="#ffffff"/><rect x="7" y="6" width="3" height="1" fill="#d2fbf4"/><rect x="10" y="6" width="2" height="1" fill="#4aedd9"/><rect x="12" y="6" width="1" height="1" fill="#17695f"/><rect x="2" y="7" width="1" height="1" fill="#17695f"/><rect x="3" y="7" width="1" height="1" fill="#ffffff"/><rect x="4" y="7" width="1" height="1" fill="#a1f3e6"/><rect x="5" y="7" width="1" height="1" fill="#ffffff"/><rect x="6" y="7" width="4" height="1" fill="#8cf4e2"/><rect x="10" y="7" width="1" height="1" fill="#239f8a"/><rect x="11" y="7" width="1" height="1" fill="#4aedd9"/><rect x="12" y="7" width="1" height="1" fill="#17695f"/><rect x="2" y="8" width="1" height="1" fill="#17695f"/><rect x="3" y="8" width="1" height="1" fill="#ffffff"/><rect x="4" y="8" width="2" height="1" fill="#a1f3e6"/><rect x="6" y="8" width="4" height="1" fill="#8cf4e2"/><rect x="10" y="8" width="1" height="1" fill="#239f8a"/><rect x="11" y="8" width="2" height="1" fill="#4aedd9"/><rect x="13" y="8" width="1" height="1" fill="#17695f"/><rect x="2" y="9" width="1" height="1" fill="#17695f"/><rect x="3" y="9" width="1" height="1" fill="#ffffff"/><rect x="4" y="9" width="1" height="1" fill="#a1f3e6"/><rect x="5" y="9" width="1" height="1" fill="#2ccbb0"/><rect x="6" y="9" width="4" height="1" fill="#8cf4e2"/><rect x="10" y="9" width="1" height="1" fill="#239f8a"/><rect x="11" y="9" width="2" height="1" fill="#1f8573"/><rect x="13" y="9" width="1" height="1" fill="#17695f"/><rect x="2" y="10" width="1" height="1" fill="#17695f"/><rect x="3" y="10" width="1" height="1" fill="#ffffff"/><rect x="4" y="10" width="2" height="1" fill="#4aedd9"/><rect x="6" y="10" width="4" height="1" fill="#1f8573"/><rect x="10" y="10" width="2" height="1" fill="#4aedd9"/><rect x="12" y="10" width="1" height="1" fill="#239f8a"/><rect x="13" y="10" width="1" height="1" fill="#17695f"/><rect x="3" y="11" width="1" height="1" fill="#17695f"/><rect x="4" y="11" width="1" height="1" fill="#4aedd9"/><rect x="5" y="11" width="1" height="1" fill="#1f8573"/><rect x="6" y="11" width="4" height="1" fill="#2ccbb0"/><rect x="10" y="11" width="1" height="1" fill="#1f8573"/><rect x="11" y="11" width="1" height="1" fill="#4aedd9"/><rect x="12" y="11" width="1" height="1" fill="#17695f"/><rect x="3" y="12" width="1" height="1" fill="#17695f"/><rect x="4" y="12" width="1" height="1" fill="#4aedd9"/><rect x="5" y="12" width="1" height="1" fill="#1f8573"/><rect x="6" y="12" width="4" height="1" fill="#2ccbb0"/><rect x="10" y="12" width="1" height="1" fill="#1f8573"/><rect x="11" y="12" width="1" height="1" fill="#239f8a"/><rect x="12" y="12" width="1" height="1" fill="#17695f"/><rect x="4" y="13" width="1" height="1" fill="#17695f"/><rect x="5" y="13" width="1" height="1" fill="#239f8a"/><rect x="6" y="13" width="4" height="1" fill="#2ccbb0"/><rect x="10" y="13" width="1" height="1" fill="#239f8a"/><rect x="11" y="13" width="1" height="1" fill="#17695f"/><rect x="5" y="14" width="6" height="1" fill="#17695f"/></g></svg><svg class="b" style="left:29.3px;top:51.3px" width="16" height="16" viewBox="0 0 16 16" preserveAspectRatio="none" shape-rendering="crispEdges"><filter id="si0" x="-10%" y="-10%" width="120%" height="120%"><feGaussianBlur stdDeviation="0.2"/></filter><g filter="url(#si0)"><rect x="10" y="2" width="2" height="1" fill="#5c5c5c"/><rect x="7" y="3" width="3" height="1" fill="#5c5c5c"/><rect x="10" y="3" width="2" height="1" fill="#a8a8a8"/><rect x="12" y="3" width="1" height="1" fill="#5c5c5c"/><rect x="4" y="4" width="3" height="1" fill="#5c5c5c"/><rect x="7" y="4" width="1" height="1" fill="#a8a8a8"/><rect x="8" y="4" width="1" height="1" fill="#ffffff"/><rect x="9" y="4" width="3" height="1" fill="#d8d8d8"/><rect x="12" y="4" width="1" height="1" fill="#a8a8a8"/><rect x="13" y="4" width="1" height="1" fill="#5c5c5c"/><rect x="1" y="5" width="3" height="1" fill="#5c5c5c"/><rect x="4" y="5" width="1" height="1" fill="#a8a8a8"/><rect x="5" y="5" width="2" height="1" fill="#ffffff"/><rect x="7" y="5" width="6" height="1" fill="#d8d8d8"/><rect x="13" y="5" width="1" height="1" fill="#a8a8a8"/><rect x="14" y="5" width="1" height="1" fill="#5c5c5c"/><rect x="0" y="6" width="1" height="1" fill="#5c5c5c"/><rect x="1" y="6" width="1" height="1" fill="#a8a8a8"/><rect x="2" y="6" width="3" height="1" fill="#ffffff"/><rect x="5" y="6" width="6" height="1" fill="#d8d8d8"/><rect x="11" y="6" width="4" height="1" fill="#727272"/><rect x="15" y="6" width="1" height="1" fill="#4c4c4c"/><rect x="0" y="7" width="1" height="1" fill="#5c5c5c"/><rect x="1" y="7" width="1" height="1" fill="#ffffff"/><rect x="2" y="7" width="1" height="1" fill="#828282"/><rect x="3" y="7" width="5" height="1" fill="#d8d8d8"/><rect x="8" y="7" width="3" height="1" fill="#727272"/><rect x="11" y="7" width="4" height="1" fill="#969696"/><rect x="15" y="7" width="1" height="1" fill="#4c4c4c"/><rect x="0" y="8" width="1" height="1" fill="#5c5c5c"/><rect x="1" y="8" width="1" height="1" fill="#ffffff"/><rect x="2" y="8" width="1" height="1" fill="#d8d8d8"/><rect x="3" y="8" width="1" height="1" fill="#828282"/><rect x="4" y="8" width="1" height="1" fill="#d8d8d8"/><rect x="5" y="8" width="3" height="1" fill="#727272"/><rect x="8" y="8" width="5" height="1" fill="#969696"/><rect x="13" y="8" width="2" height="1" fill="#7f7f7f"/><rect x="15" y="8" width="1" height="1" fill="#4c4c4c"/><rect x="0" y="9" width="1" height="1" fill="#5c5c5c"/><rect x="1" y="9" width="2" height="1" fill="#ffffff"/><rect x="3" y="9" width="1" height="1" fill="#a8a8a8"/><rect x="4" y="9" width="1" height="1" fill="#828282"/><rect x="5" y="9" width="5" height="1" fill="#969696"/><rect x="10" y="9" width="5" height="1" fill="#7f7f7f"/><rect x="15" y="9" width="1" height="1" fill="#4c4c4c"/><rect x="0" y="10" width="1" height="1" fill="#5c5c5c"/><rect x="1" y="10" width="2" height="1" fill="#969696"/><rect x="3" y="10" width="1" height="1" fill="#a8a8a8"/><rect x="4" y="10" width="1" height="1" fill="#828282"/><rect x="5" y="10" width="3" height="1" fill="#969696"/><rect x="8" y="10" width="4" height="1" fill="#7f7f7f"/><rect x="12" y="10" width="3" height="1" fill="#5c5c5c"/><rect x="1" y="11" width="1" height="1" fill="#5c5c5c"/><rect x="2" y="11" width="3" height="1" fill="#969696"/><rect x="5" y="11" width="4" height="1" fill="#7f7f7f"/><rect x="9" y="11" width="3" height="1" fill="#5c5c5c"/><rect x="2" y="12" width="1" height="1" fill="#5c5c5c"/><rect x="3" y="12" width="3" height="1" fill="#969696"/><rect x="6" y="12" width="3" height="1" fill="#5c5c5c"/><rect x="3" y="13" width="3" height="1" fill="#5c5c5c"/></g></svg><div class="t" style="left:48.5px;top:50px;font-size:16px;color:#fafaf9;-webkit-text-stroke:0.25px #fafaf9;letter-spacing:-0.25px">DIAM/IRON</div><div class="t" style="right:195.05px;top:50px;font-size:16px;letter-spacing:0.45px;color:#00c950">44.55</div><div class="t" style="right:104.55px;top:50px;font-size:16px;letter-spacing:0.45px;color:#00c950">-3.65%</div><div class="t" style="right:12.55px;top:50px;font-size:16px;letter-spacing:0.45px;color:#fafaf9">73<span class="n1">1</span>.934</div><div class="hl" style="left:0;top:80px;width:426px"></div><svg class="b" style="left:15px;top:92.3px" width="16" height="16" viewBox="0 0 16 16" preserveAspectRatio="none" shape-rendering="crispEdges"><filter id="sg1" x="-10%" y="-10%" width="120%" height="120%"><feGaussianBlur stdDeviation="0.2"/></filter><g filter="url(#sg1)"><rect x="10" y="2" width="2" height="1" fill="#c9861f"/><rect x="7" y="3" width="3" height="1" fill="#c9861f"/><rect x="10" y="3" width="2" height="1" fill="#fcee4b"/><rect x="12" y="3" width="1" height="1" fill="#c9861f"/><rect x="4" y="4" width="3" height="1" fill="#c9861f"/><rect x="7" y="4" width="1" height="1" fill="#fcee4b"/><rect x="8" y="4" width="1" height="1" fill="#ffffc0"/><rect x="9" y="4" width="3" height="1" fill="#fdf55f"/><rect x="12" y="4" width="1" height="1" fill="#fcee4b"/><rect x="13" y="4" width="1" height="1" fill="#c9861f"/><rect x="1" y="5" width="3" height="1" fill="#c9861f"/><rect x="4" y="5" width="1" height="1" fill="#fcee4b"/><rect x="5" y="5" width="2" height="1" fill="#ffffc0"/><rect x="7" y="5" width="6" height="1" fill="#fdf55f"/><rect x="13" y="5" width="1" height="1" fill="#fcee4b"/><rect x="14" y="5" width="1" height="1" fill="#c9861f"/><rect x="0" y="6" width="1" height="1" fill="#c9861f"/><rect x="1" y="6" width="1" height="1" fill="#fcee4b"/><rect x="2" y="6" width="3" height="1" fill="#ffffc0"/><rect x="5" y="6" width="6" height="1" fill="#fdf55f"/><rect x="11" y="6" width="4" height="1" fill="#f0b820"/><rect x="15" y="6" width="1" height="1" fill="#b5520a"/><rect x="0" y="7" width="1" height="1" fill="#c9861f"/><rect x="1" y="7" width="1" height="1" fill="#ffffc0"/><rect x="2" y="7" width="1" height="1" fill="#f5cc27"/><rect x="3" y="7" width="5" height="1" fill="#fdf55f"/><rect x="8" y="7" width="3" height="1" fill="#f0b820"/><rect x="11" y="7" width="4" height="1" fill="#f7d733"/><rect x="15" y="7" width="1" height="1" fill="#b5520a"/><rect x="0" y="8" width="1" height="1" fill="#c9861f"/><rect x="1" y="8" width="1" height="1" fill="#ffffc0"/><rect x="2" y="8" width="1" height="1" fill="#fdf55f"/><rect x="3" y="8" width="1" height="1" fill="#f5cc27"/><rect x="4" y="8" width="1" height="1" fill="#fdf55f"/><rect x="5" y="8" width="3" height="1" fill="#f0b820"/><rect x="8" y="8" width="5" height="1" fill="#f7d733"/><rect x="13" y="8" width="2" height="1" fill="#ee9f14"/><rect x="15" y="8" width="1" height="1" fill="#b5520a"/><rect x="0" y="9" width="1" height="1" fill="#c9861f"/><rect x="1" y="9" width="2" height="1" fill="#ffffc0"/><rect x="3" y="9" width="1" height="1" fill="#fcee4b"/><rect x="4" y="9" width="1" height="1" fill="#f5cc27"/><rect x="5" y="9" width="5" height="1" fill="#f7d733"/><rect x="10" y="9" width="5" height="1" fill="#ee9f14"/><rect x="15" y="9" width="1" height="1" fill="#b5520a"/><rect x="0" y="10" width="1" height="1" fill="#c9861f"/><rect x="1" y="10" width="2" height="1" fill="#f7d733"/><rect x="3" y="10" width="1" height="1" fill="#fcee4b"/><rect x="4" y="10" width="1" height="1" fill="#f5cc27"/><rect x="5" y="10" width="3" height="1" fill="#f7d733"/><rect x="8" y="10" width="4" height="1" fill="#ee9f14"/><rect x="12" y="10" width="3" height="1" fill="#c9861f"/><rect x="1" y="11" width="1" height="1" fill="#c9861f"/><rect x="2" y="11" width="3" height="1" fill="#f7d733"/><rect x="5" y="11" width="4" height="1" fill="#ee9f14"/><rect x="9" y="11" width="3" height="1" fill="#c9861f"/><rect x="2" y="12" width="1" height="1" fill="#c9861f"/><rect x="3" y="12" width="3" height="1" fill="#f7d733"/><rect x="6" y="12" width="3" height="1" fill="#c9861f"/><rect x="3" y="13" width="3" height="1" fill="#c9861f"/></g></svg><svg class="b" style="left:29.3px;top:92.3px" width="16" height="16" viewBox="0 0 16 16" preserveAspectRatio="none" shape-rendering="crispEdges"><filter id="si1" x="-10%" y="-10%" width="120%" height="120%"><feGaussianBlur stdDeviation="0.2"/></filter><g filter="url(#si1)"><rect x="10" y="2" width="2" height="1" fill="#5c5c5c"/><rect x="7" y="3" width="3" height="1" fill="#5c5c5c"/><rect x="10" y="3" width="2" height="1" fill="#a8a8a8"/><rect x="12" y="3" width="1" height="1" fill="#5c5c5c"/><rect x="4" y="4" width="3" height="1" fill="#5c5c5c"/><rect x="7" y="4" width="1" height="1" fill="#a8a8a8"/><rect x="8" y="4" width="1" height="1" fill="#ffffff"/><rect x="9" y="4" width="3" height="1" fill="#d8d8d8"/><rect x="12" y="4" width="1" height="1" fill="#a8a8a8"/><rect x="13" y="4" width="1" height="1" fill="#5c5c5c"/><rect x="1" y="5" width="3" height="1" fill="#5c5c5c"/><rect x="4" y="5" width="1" height="1" fill="#a8a8a8"/><rect x="5" y="5" width="2" height="1" fill="#ffffff"/><rect x="7" y="5" width="6" height="1" fill="#d8d8d8"/><rect x="13" y="5" width="1" height="1" fill="#a8a8a8"/><rect x="14" y="5" width="1" height="1" fill="#5c5c5c"/><rect x="0" y="6" width="1" height="1" fill="#5c5c5c"/><rect x="1" y="6" width="1" height="1" fill="#a8a8a8"/><rect x="2" y="6" width="3" height="1" fill="#ffffff"/><rect x="5" y="6" width="6" height="1" fill="#d8d8d8"/><rect x="11" y="6" width="4" height="1" fill="#727272"/><rect x="15" y="6" width="1" height="1" fill="#4c4c4c"/><rect x="0" y="7" width="1" height="1" fill="#5c5c5c"/><rect x="1" y="7" width="1" height="1" fill="#ffffff"/><rect x="2" y="7" width="1" height="1" fill="#828282"/><rect x="3" y="7" width="5" height="1" fill="#d8d8d8"/><rect x="8" y="7" width="3" height="1" fill="#727272"/><rect x="11" y="7" width="4" height="1" fill="#969696"/><rect x="15" y="7" width="1" height="1" fill="#4c4c4c"/><rect x="0" y="8" width="1" height="1" fill="#5c5c5c"/><rect x="1" y="8" width="1" height="1" fill="#ffffff"/><rect x="2" y="8" width="1" height="1" fill="#d8d8d8"/><rect x="3" y="8" width="1" height="1" fill="#828282"/><rect x="4" y="8" width="1" height="1" fill="#d8d8d8"/><rect x="5" y="8" width="3" height="1" fill="#727272"/><rect x="8" y="8" width="5" height="1" fill="#969696"/><rect x="13" y="8" width="2" height="1" fill="#7f7f7f"/><rect x="15" y="8" width="1" height="1" fill="#4c4c4c"/><rect x="0" y="9" width="1" height="1" fill="#5c5c5c"/><rect x="1" y="9" width="2" height="1" fill="#ffffff"/><rect x="3" y="9" width="1" height="1" fill="#a8a8a8"/><rect x="4" y="9" width="1" height="1" fill="#828282"/><rect x="5" y="9" width="5" height="1" fill="#969696"/><rect x="10" y="9" width="5" height="1" fill="#7f7f7f"/><rect x="15" y="9" width="1" height="1" fill="#4c4c4c"/><rect x="0" y="10" width="1" height="1" fill="#5c5c5c"/><rect x="1" y="10" width="2" height="1" fill="#969696"/><rect x="3" y="10" width="1" height="1" fill="#a8a8a8"/><rect x="4" y="10" width="1" height="1" fill="#828282"/><rect x="5" y="10" width="3" height="1" fill="#969696"/><rect x="8" y="10" width="4" height="1" fill="#7f7f7f"/><rect x="12" y="10" width="3" height="1" fill="#5c5c5c"/><rect x="1" y="11" width="1" height="1" fill="#5c5c5c"/><rect x="2" y="11" width="3" height="1" fill="#969696"/><rect x="5" y="11" width="4" height="1" fill="#7f7f7f"/><rect x="9" y="11" width="3" height="1" fill="#5c5c5c"/><rect x="2" y="12" width="1" height="1" fill="#5c5c5c"/><rect x="3" y="12" width="3" height="1" fill="#969696"/><rect x="6" y="12" width="3" height="1" fill="#5c5c5c"/><rect x="3" y="13" width="3" height="1" fill="#5c5c5c"/></g></svg><div class="t" style="left:48.5px;top:91px;font-size:16px;color:#fafaf9;-webkit-text-stroke:0.25px #fafaf9;letter-spacing:-0.6px">GOLD/IRON</div><div class="t" style="right:195.05px;top:91px;font-size:16px;letter-spacing:0.45px;color:#00c950">33.59</div><div class="t" style="right:104.55px;top:91px;font-size:16px;letter-spacing:0.45px;color:#00c950"><span class="n1">1</span>0.89%</div><div class="t" style="right:12.55px;top:91px;font-size:16px;letter-spacing:0.45px;color:#fafaf9">5<span class="n1">1</span>4.867</div><div class="hl" style="left:0;top:120px;width:426px"></div><svg class="b" style="left:15.5px;top:132.10000000000002px" width="16.5" height="16.5" viewBox="0 0 16 16" preserveAspectRatio="none"><polygon points="8,0.2 15.6,3.9 8,7.7 0.4,3.9" fill="#b08e58"/><polygon points="0.4,3.9 8,7.7 8,15.9 0.4,12.1" fill="#715634"/><polygon points="15.6,3.9 8,7.7 8,15.9 15.6,12.1" fill="#5f482b"/><defs><clipPath id="cc1t"><polygon points="8,0.2 15.6,3.9 8,7.7 0.4,3.9"/></clipPath><clipPath id="cc1l"><polygon points="0.4,3.9 8,7.7 8,15.9 0.4,12.1"/></clipPath><clipPath id="cc1r"><polygon points="15.6,3.9 8,7.7 8,15.9 15.6,12.1"/></clipPath></defs><g clip-path="url(#cc1t)"></g><g clip-path="url(#cc1l)"><rect x="1.5" y="3" width="0.8" height="13" fill="#000" opacity="0.28"/><rect x="4" y="3" width="0.8" height="13" fill="#000" opacity="0.28"/><rect x="6.2" y="3" width="0.8" height="13" fill="#000" opacity="0.28"/></g><g clip-path="url(#cc1r)"><rect x="13.7" y="3" width="0.8" height="13" fill="#000" opacity="0.28"/><rect x="11.2" y="3" width="0.8" height="13" fill="#000" opacity="0.28"/><rect x="9.0" y="3" width="0.8" height="13" fill="#000" opacity="0.28"/></g></svg><svg class="b" style="left:29.3px;top:132.3px" width="16" height="16" viewBox="0 0 16 16" preserveAspectRatio="none" shape-rendering="crispEdges"><filter id="si2" x="-10%" y="-10%" width="120%" height="120%"><feGaussianBlur stdDeviation="0.2"/></filter><g filter="url(#si2)"><rect x="10" y="2" width="2" height="1" fill="#5c5c5c"/><rect x="7" y="3" width="3" height="1" fill="#5c5c5c"/><rect x="10" y="3" width="2" height="1" fill="#a8a8a8"/><rect x="12" y="3" width="1" height="1" fill="#5c5c5c"/><rect x="4" y="4" width="3" height="1" fill="#5c5c5c"/><rect x="7" y="4" width="1" height="1" fill="#a8a8a8"/><rect x="8" y="4" width="1" height="1" fill="#ffffff"/><rect x="9" y="4" width="3" height="1" fill="#d8d8d8"/><rect x="12" y="4" width="1" height="1" fill="#a8a8a8"/><rect x="13" y="4" width="1" height="1" fill="#5c5c5c"/><rect x="1" y="5" width="3" height="1" fill="#5c5c5c"/><rect x="4" y="5" width="1" height="1" fill="#a8a8a8"/><rect x="5" y="5" width="2" height="1" fill="#ffffff"/><rect x="7" y="5" width="6" height="1" fill="#d8d8d8"/><rect x="13" y="5" width="1" height="1" fill="#a8a8a8"/><rect x="14" y="5" width="1" height="1" fill="#5c5c5c"/><rect x="0" y="6" width="1" height="1" fill="#5c5c5c"/><rect x="1" y="6" width="1" height="1" fill="#a8a8a8"/><rect x="2" y="6" width="3" height="1" fill="#ffffff"/><rect x="5" y="6" width="6" height="1" fill="#d8d8d8"/><rect x="11" y="6" width="4" height="1" fill="#727272"/><rect x="15" y="6" width="1" height="1" fill="#4c4c4c"/><rect x="0" y="7" width="1" height="1" fill="#5c5c5c"/><rect x="1" y="7" width="1" height="1" fill="#ffffff"/><rect x="2" y="7" width="1" height="1" fill="#828282"/><rect x="3" y="7" width="5" height="1" fill="#d8d8d8"/><rect x="8" y="7" width="3" height="1" fill="#727272"/><rect x="11" y="7" width="4" height="1" fill="#969696"/><rect x="15" y="7" width="1" height="1" fill="#4c4c4c"/><rect x="0" y="8" width="1" height="1" fill="#5c5c5c"/><rect x="1" y="8" width="1" height="1" fill="#ffffff"/><rect x="2" y="8" width="1" height="1" fill="#d8d8d8"/><rect x="3" y="8" width="1" height="1" fill="#828282"/><rect x="4" y="8" width="1" height="1" fill="#d8d8d8"/><rect x="5" y="8" width="3" height="1" fill="#727272"/><rect x="8" y="8" width="5" height="1" fill="#969696"/><rect x="13" y="8" width="2" height="1" fill="#7f7f7f"/><rect x="15" y="8" width="1" height="1" fill="#4c4c4c"/><rect x="0" y="9" width="1" height="1" fill="#5c5c5c"/><rect x="1" y="9" width="2" height="1" fill="#ffffff"/><rect x="3" y="9" width="1" height="1" fill="#a8a8a8"/><rect x="4" y="9" width="1" height="1" fill="#828282"/><rect x="5" y="9" width="5" height="1" fill="#969696"/><rect x="10" y="9" width="5" height="1" fill="#7f7f7f"/><rect x="15" y="9" width="1" height="1" fill="#4c4c4c"/><rect x="0" y="10" width="1" height="1" fill="#5c5c5c"/><rect x="1" y="10" width="2" height="1" fill="#969696"/><rect x="3" y="10" width="1" height="1" fill="#a8a8a8"/><rect x="4" y="10" width="1" height="1" fill="#828282"/><rect x="5" y="10" width="3" height="1" fill="#969696"/><rect x="8" y="10" width="4" height="1" fill="#7f7f7f"/><rect x="12" y="10" width="3" height="1" fill="#5c5c5c"/><rect x="1" y="11" width="1" height="1" fill="#5c5c5c"/><rect x="2" y="11" width="3" height="1" fill="#969696"/><rect x="5" y="11" width="4" height="1" fill="#7f7f7f"/><rect x="9" y="11" width="3" height="1" fill="#5c5c5c"/><rect x="2" y="12" width="1" height="1" fill="#5c5c5c"/><rect x="3" y="12" width="3" height="1" fill="#969696"/><rect x="6" y="12" width="3" height="1" fill="#5c5c5c"/><rect x="3" y="13" width="3" height="1" fill="#5c5c5c"/></g></svg><div class="t" style="left:48.5px;top:131px;font-size:16px;color:#fafaf9;-webkit-text-stroke:0.25px #fafaf9;letter-spacing:-0.63px">OLOG/IRON</div><div class="t" style="right:195.05px;top:131px;font-size:16px;letter-spacing:0.45px;color:#00c950">0.49</div><div class="t" style="right:104.55px;top:131px;font-size:16px;letter-spacing:0.45px;color:#00c950">0.00%</div><div class="t" style="right:13.850000000000001px;top:131px;font-size:16px;letter-spacing:0.45px;color:#fafaf9"><span class="n7d">7</span>.94<span class="n1">1</span></div><div class="hl" style="left:0;top:160px;width:426px"></div><svg class="b" style="left:15.5px;top:172.10000000000002px" width="16.5" height="16.5" viewBox="0 0 16 16" preserveAspectRatio="none"><polygon points="8,0.2 15.6,3.9 8,7.7 0.4,3.9" fill="#b08a4c"/><polygon points="0.4,3.9 8,7.7 8,15.9 0.4,12.1" fill="#3a2812"/><polygon points="15.6,3.9 8,7.7 8,15.9 15.6,12.1" fill="#2c1d0c"/><defs><clipPath id="cc2t"><polygon points="8,0.2 15.6,3.9 8,7.7 0.4,3.9"/></clipPath><clipPath id="cc2l"><polygon points="0.4,3.9 8,7.7 8,15.9 0.4,12.1"/></clipPath><clipPath id="cc2r"><polygon points="15.6,3.9 8,7.7 8,15.9 15.6,12.1"/></clipPath></defs><g clip-path="url(#cc2t)"></g><g clip-path="url(#cc2l)"><rect x="1.5" y="3" width="0.8" height="13" fill="#000" opacity="0.28"/><rect x="4" y="3" width="0.8" height="13" fill="#000" opacity="0.28"/><rect x="6.2" y="3" width="0.8" height="13" fill="#000" opacity="0.28"/></g><g clip-path="url(#cc2r)"><rect x="13.7" y="3" width="0.8" height="13" fill="#000" opacity="0.28"/><rect x="11.2" y="3" width="0.8" height="13" fill="#000" opacity="0.28"/><rect x="9.0" y="3" width="0.8" height="13" fill="#000" opacity="0.28"/></g></svg><svg class="b" style="left:29.3px;top:172.3px" width="16" height="16" viewBox="0 0 16 16" preserveAspectRatio="none" shape-rendering="crispEdges"><filter id="si3" x="-10%" y="-10%" width="120%" height="120%"><feGaussianBlur stdDeviation="0.2"/></filter><g filter="url(#si3)"><rect x="10" y="2" width="2" height="1" fill="#5c5c5c"/><rect x="7" y="3" width="3" height="1" fill="#5c5c5c"/><rect x="10" y="3" width="2" height="1" fill="#a8a8a8"/><rect x="12" y="3" width="1" height="1" fill="#5c5c5c"/><rect x="4" y="4" width="3" height="1" fill="#5c5c5c"/><rect x="7" y="4" width="1" height="1" fill="#a8a8a8"/><rect x="8" y="4" width="1" height="1" fill="#ffffff"/><rect x="9" y="4" width="3" height="1" fill="#d8d8d8"/><rect x="12" y="4" width="1" height="1" fill="#a8a8a8"/><rect x="13" y="4" width="1" height="1" fill="#5c5c5c"/><rect x="1" y="5" width="3" height="1" fill="#5c5c5c"/><rect x="4" y="5" width="1" height="1" fill="#a8a8a8"/><rect x="5" y="5" width="2" height="1" fill="#ffffff"/><rect x="7" y="5" width="6" height="1" fill="#d8d8d8"/><rect x="13" y="5" width="1" height="1" fill="#a8a8a8"/><rect x="14" y="5" width="1" height="1" fill="#5c5c5c"/><rect x="0" y="6" width="1" height="1" fill="#5c5c5c"/><rect x="1" y="6" width="1" height="1" fill="#a8a8a8"/><rect x="2" y="6" width="3" height="1" fill="#ffffff"/><rect x="5" y="6" width="6" height="1" fill="#d8d8d8"/><rect x="11" y="6" width="4" height="1" fill="#727272"/><rect x="15" y="6" width="1" height="1" fill="#4c4c4c"/><rect x="0" y="7" width="1" height="1" fill="#5c5c5c"/><rect x="1" y="7" width="1" height="1" fill="#ffffff"/><rect x="2" y="7" width="1" height="1" fill="#828282"/><rect x="3" y="7" width="5" height="1" fill="#d8d8d8"/><rect x="8" y="7" width="3" height="1" fill="#727272"/><rect x="11" y="7" width="4" height="1" fill="#969696"/><rect x="15" y="7" width="1" height="1" fill="#4c4c4c"/><rect x="0" y="8" width="1" height="1" fill="#5c5c5c"/><rect x="1" y="8" width="1" height="1" fill="#ffffff"/><rect x="2" y="8" width="1" height="1" fill="#d8d8d8"/><rect x="3" y="8" width="1" height="1" fill="#828282"/><rect x="4" y="8" width="1" height="1" fill="#d8d8d8"/><rect x="5" y="8" width="3" height="1" fill="#727272"/><rect x="8" y="8" width="5" height="1" fill="#969696"/><rect x="13" y="8" width="2" height="1" fill="#7f7f7f"/><rect x="15" y="8" width="1" height="1" fill="#4c4c4c"/><rect x="0" y="9" width="1" height="1" fill="#5c5c5c"/><rect x="1" y="9" width="2" height="1" fill="#ffffff"/><rect x="3" y="9" width="1" height="1" fill="#a8a8a8"/><rect x="4" y="9" width="1" height="1" fill="#828282"/><rect x="5" y="9" width="5" height="1" fill="#969696"/><rect x="10" y="9" width="5" height="1" fill="#7f7f7f"/><rect x="15" y="9" width="1" height="1" fill="#4c4c4c"/><rect x="0" y="10" width="1" height="1" fill="#5c5c5c"/><rect x="1" y="10" width="2" height="1" fill="#969696"/><rect x="3" y="10" width="1" height="1" fill="#a8a8a8"/><rect x="4" y="10" width="1" height="1" fill="#828282"/><rect x="5" y="10" width="3" height="1" fill="#969696"/><rect x="8" y="10" width="4" height="1" fill="#7f7f7f"/><rect x="12" y="10" width="3" height="1" fill="#5c5c5c"/><rect x="1" y="11" width="1" height="1" fill="#5c5c5c"/><rect x="2" y="11" width="3" height="1" fill="#969696"/><rect x="5" y="11" width="4" height="1" fill="#7f7f7f"/><rect x="9" y="11" width="3" height="1" fill="#5c5c5c"/><rect x="2" y="12" width="1" height="1" fill="#5c5c5c"/><rect x="3" y="12" width="3" height="1" fill="#969696"/><rect x="6" y="12" width="3" height="1" fill="#5c5c5c"/><rect x="3" y="13" width="3" height="1" fill="#5c5c5c"/></g></svg><div class="t" style="left:48.5px;top:171px;font-size:16px;color:#fafaf9;-webkit-text-stroke:0.25px #fafaf9;letter-spacing:-0.65px">SLOG/IRON</div><div class="t" style="right:195.05px;top:171px;font-size:16px;letter-spacing:0.45px;color:#00c950">0.99</div><div class="t" style="right:104.55px;top:171px;font-size:16px;letter-spacing:0.45px;color:#00c950">-<span class="n1">1</span>.98%</div><div class="t" style="right:12.55px;top:171px;font-size:16px;letter-spacing:0.45px;color:#fafaf9"><span class="n1">1</span>5.<span class="n1">1</span>62</div><div class="hl" style="left:0;top:200px;width:426px"></div><svg class="b" style="left:15.5px;top:213.10000000000002px" width="16.5" height="16.5" viewBox="0 0 16 16" preserveAspectRatio="none"><polygon points="8,0.2 15.6,3.9 8,7.7 0.4,3.9" fill="#b9985f"/><polygon points="0.4,3.9 8,7.7 8,15.9 0.4,12.1" fill="#cfcec8"/><polygon points="15.6,3.9 8,7.7 8,15.9 15.6,12.1" fill="#b3b2ac"/><defs><clipPath id="cc3t"><polygon points="8,0.2 15.6,3.9 8,7.7 0.4,3.9"/></clipPath><clipPath id="cc3l"><polygon points="0.4,3.9 8,7.7 8,15.9 0.4,12.1"/></clipPath><clipPath id="cc3r"><polygon points="15.6,3.9 8,7.7 8,15.9 15.6,12.1"/></clipPath></defs><g clip-path="url(#cc3t)"><rect x="0" y="1" width="1" height="1" fill="#fff" opacity="0.10"/><rect x="0" y="2" width="1" height="1" fill="#000" opacity="0.12"/><rect x="0" y="3" width="1" height="1" fill="#fff" opacity="0.10"/><rect x="0" y="4" width="1" height="1" fill="#000" opacity="0.12"/><rect x="0" y="6" width="1" height="1" fill="#000" opacity="0.12"/><rect x="1" y="0" width="1" height="1" fill="#000" opacity="0.12"/><rect x="1" y="5" width="1" height="1" fill="#fff" opacity="0.10"/><rect x="1" y="6" width="1" height="1" fill="#fff" opacity="0.10"/><rect x="1" y="7" width="1" height="1" fill="#000" opacity="0.12"/><rect x="2" y="1" width="1" height="1" fill="#fff" opacity="0.10"/><rect x="2" y="5" width="1" height="1" fill="#fff" opacity="0.10"/><rect x="2" y="6" width="1" height="1" fill="#000" opacity="0.12"/><rect x="3" y="0" width="1" height="1" fill="#fff" opacity="0.10"/><rect x="3" y="1" width="1" height="1" fill="#000" opacity="0.12"/><rect x="3" y="6" width="1" height="1" fill="#fff" opacity="0.10"/><rect x="3" y="7" width="1" height="1" fill="#fff" opacity="0.10"/><rect x="4" y="1" width="1" height="1" fill="#fff" opacity="0.10"/><rect x="4" y="2" width="1" height="1" fill="#000" opacity="0.12"/><rect x="4" y="3" width="1" height="1" fill="#000" opacity="0.12"/><rect x="4" y="6" width="1" height="1" fill="#fff" opacity="0.10"/><rect x="4" y="7" width="1" height="1" fill="#fff" opacity="0.10"/><rect x="5" y="0" width="1" height="1" fill="#fff" opacity="0.10"/><rect x="5" y="3" width="1" height="1" fill="#fff" opacity="0.10"/><rect x="5" y="4" width="1" height="1" fill="#000" opacity="0.12"/><rect x="5" y="6" width="1" height="1" fill="#000" opacity="0.12"/><rect x="5" y="7" width="1" height="1" fill="#000" opacity="0.12"/><rect x="6" y="2" width="1" height="1" fill="#fff" opacity="0.10"/><rect x="6" y="3" width="1" height="1" fill="#000" opacity="0.12"/><rect x="6" y="5" width="1" height="1" fill="#fff" opacity="0.10"/><rect x="8" y="1" width="1" height="1" fill="#fff" opacity="0.10"/><rect x="8" y="3" width="1" height="1" fill="#000" opacity="0.12"/><rect x="8" y="6" width="1" height="1" fill="#fff" opacity="0.10"/><rect x="9" y="1" width="1" height="1" fill="#000" opacity="0.12"/><rect x="9" y="6" width="1" height="1" fill="#000" opacity="0.12"/><rect x="9" y="7" width="1" height="1" fill="#fff" opacity="0.10"/><rect x="10" y="1" width="1" height="1" fill="#fff" opacity="0.10"/><rect x="11" y="2" width="1" height="1" fill="#fff" opacity="0.10"/><rect x="11" y="5" width="1" height="1" fill="#000" opacity="0.12"/><rect x="12" y="3" width="1" height="1" fill="#fff" opacity="0.10"/><rect x="13" y="2" width="1" height="1" fill="#000" opacity="0.12"/><rect x="13" y="4" width="1" height="1" fill="#000" opacity="0.12"/><rect x="13" y="6" width="1" height="1" fill="#fff" opacity="0.10"/><rect x="14" y="0" width="1" height="1" fill="#fff" opacity="0.10"/><rect x="14" y="1" width="1" height="1" fill="#000" opacity="0.12"/><rect x="14" y="3" width="1" height="1" fill="#000" opacity="0.12"/><rect x="14" y="4" width="1" height="1" fill="#000" opacity="0.12"/><rect x="14" y="5" width="1" height="1" fill="#fff" opacity="0.10"/><rect x="14" y="6" width="1" height="1" fill="#000" opacity="0.12"/><rect x="14" y="7" width="1" height="1" fill="#fff" opacity="0.10"/><rect x="15" y="2" width="1" height="1" fill="#000" opacity="0.12"/><rect x="15" y="3" width="1" height="1" fill="#fff" opacity="0.10"/><rect x="15" y="5" width="1" height="1" fill="#000" opacity="0.12"/><rect x="15" y="6" width="1" height="1" fill="#000" opacity="0.12"/><rect x="15" y="7" width="1" height="1" fill="#000" opacity="0.12"/></g><g clip-path="url(#cc3l)"><rect x="0" y="4" width="1" height="1" fill="#000" opacity="0.12"/><rect x="0" y="13" width="1" height="1" fill="#fff" opacity="0.10"/><rect x="0" y="14" width="1" height="1" fill="#fff" opacity="0.10"/><rect x="0" y="15" width="1" height="1" fill="#fff" opacity="0.10"/><rect x="1" y="4" width="1" height="1" fill="#000" opacity="0.12"/><rect x="1" y="5" width="1" height="1" fill="#000" opacity="0.12"/><rect x="1" y="6" width="1" height="1" fill="#000" opacity="0.12"/><rect x="1" y="7" width="1" height="1" fill="#fff" opacity="0.10"/><rect x="1" y="9" width="1" height="1" fill="#fff" opacity="0.10"/><rect x="2" y="3" width="1" height="1" fill="#fff" opacity="0.10"/><rect x="2" y="6" width="1" height="1" fill="#000" opacity="0.12"/><rect x="2" y="7" width="1" height="1" fill="#000" opacity="0.12"/><rect x="2" y="8" width="1" height="1" fill="#fff" opacity="0.10"/><rect x="2" y="14" width="1" height="1" fill="#000" opacity="0.12"/><rect x="2" y="15" width="1" height="1" fill="#000" opacity="0.12"/><rect x="3" y="3" width="1" height="1" fill="#000" opacity="0.12"/><rect x="3" y="4" width="1" height="1" fill="#fff" opacity="0.10"/><rect x="3" y="14" width="1" height="1" fill="#fff" opacity="0.10"/><rect x="4" y="3" width="1" height="1" fill="#fff" opacity="0.10"/><rect x="4" y="7" width="1" height="1" fill="#fff" opacity="0.10"/><rect x="4" y="10" width="1" height="1" fill="#fff" opacity="0.10"/><rect x="4" y="11" width="1" height="1" fill="#fff" opacity="0.10"/><rect x="4" y="14" width="1" height="1" fill="#000" opacity="0.12"/><rect x="5" y="3" width="1" height="1" fill="#fff" opacity="0.10"/><rect x="5" y="8" width="1" height="1" fill="#000" opacity="0.12"/><rect x="5" y="10" width="1" height="1" fill="#fff" opacity="0.10"/><rect x="5" y="11" width="1" height="1" fill="#fff" opacity="0.10"/><rect x="5" y="14" width="1" height="1" fill="#fff" opacity="0.10"/><rect x="6" y="4" width="1" height="1" fill="#000" opacity="0.12"/><rect x="6" y="7" width="1" height="1" fill="#000" opacity="0.12"/><rect x="6" y="8" width="1" height="1" fill="#000" opacity="0.12"/><rect x="6" y="9" width="1" height="1" fill="#000" opacity="0.12"/><rect x="6" y="10" width="1" height="1" fill="#fff" opacity="0.10"/><rect x="6" y="11" width="1" height="1" fill="#fff" opacity="0.10"/><rect x="6" y="15" width="1" height="1" fill="#000" opacity="0.12"/><rect x="7" y="5" width="1" height="1" fill="#fff" opacity="0.10"/><rect x="7" y="6" width="1" height="1" fill="#000" opacity="0.12"/><rect x="7" y="7" width="1" height="1" fill="#fff" opacity="0.10"/><rect x="7" y="8" width="1" height="1" fill="#000" opacity="0.12"/><rect x="7" y="10" width="1" height="1" fill="#fff" opacity="0.10"/><rect x="7" y="11" width="1" height="1" fill="#000" opacity="0.12"/><rect x="7" y="13" width="1" height="1" fill="#000" opacity="0.12"/><rect x="8" y="3" width="1" height="1" fill="#fff" opacity="0.10"/><rect x="8" y="5" width="1" height="1" fill="#fff" opacity="0.10"/><rect x="8" y="7" width="1" height="1" fill="#fff" opacity="0.10"/><rect x="8" y="9" width="1" height="1" fill="#000" opacity="0.12"/><rect x="8" y="11" width="1" height="1" fill="#000" opacity="0.12"/><rect x="8" y="13" width="1" height="1" fill="#000" opacity="0.12"/></g><g clip-path="url(#cc3r)"><rect x="8" y="3" width="1" height="1" fill="#fff" opacity="0.10"/><rect x="8" y="4" width="1" height="1" fill="#000" opacity="0.12"/><rect x="8" y="5" width="1" height="1" fill="#000" opacity="0.12"/><rect x="8" y="7" width="1" height="1" fill="#fff" opacity="0.10"/><rect x="8" y="11" width="1" height="1" fill="#000" opacity="0.12"/><rect x="9" y="8" width="1" height="1" fill="#000" opacity="0.12"/><rect x="10" y="3" width="1" height="1" fill="#fff" opacity="0.10"/><rect x="10" y="5" width="1" height="1" fill="#fff" opacity="0.10"/><rect x="10" y="7" width="1" height="1" fill="#000" opacity="0.12"/><rect x="10" y="9" width="1" height="1" fill="#fff" opacity="0.10"/><rect x="10" y="12" width="1" height="1" fill="#000" opacity="0.12"/><rect x="10" y="13" width="1" height="1" fill="#000" opacity="0.12"/><rect x="11" y="3" width="1" height="1" fill="#000" opacity="0.12"/><rect x="11" y="4" width="1" height="1" fill="#fff" opacity="0.10"/><rect x="11" y="6" width="1" height="1" fill="#fff" opacity="0.10"/><rect x="11" y="8" width="1" height="1" fill="#fff" opacity="0.10"/><rect x="11" y="10" width="1" height="1" fill="#000" opacity="0.12"/><rect x="11" y="12" width="1" height="1" fill="#fff" opacity="0.10"/><rect x="12" y="8" width="1" height="1" fill="#000" opacity="0.12"/><rect x="12" y="11" width="1" height="1" fill="#000" opacity="0.12"/><rect x="12" y="12" width="1" height="1" fill="#000" opacity="0.12"/><rect x="12" y="13" width="1" height="1" fill="#fff" opacity="0.10"/><rect x="12" y="14" width="1" height="1" fill="#000" opacity="0.12"/><rect x="13" y="4" width="1" height="1" fill="#000" opacity="0.12"/><rect x="13" y="6" width="1" height="1" fill="#000" opacity="0.12"/><rect x="13" y="7" width="1" height="1" fill="#fff" opacity="0.10"/><rect x="13" y="10" width="1" height="1" fill="#000" opacity="0.12"/><rect x="13" y="12" width="1" height="1" fill="#000" opacity="0.12"/><rect x="13" y="13" width="1" height="1" fill="#fff" opacity="0.10"/><rect x="13" y="14" width="1" height="1" fill="#fff" opacity="0.10"/><rect x="13" y="15" width="1" height="1" fill="#fff" opacity="0.10"/><rect x="14" y="3" width="1" height="1" fill="#fff" opacity="0.10"/><rect x="14" y="6" width="1" height="1" fill="#000" opacity="0.12"/><rect x="14" y="7" width="1" height="1" fill="#000" opacity="0.12"/><rect x="14" y="9" width="1" height="1" fill="#fff" opacity="0.10"/><rect x="14" y="10" width="1" height="1" fill="#fff" opacity="0.10"/><rect x="14" y="13" width="1" height="1" fill="#fff" opacity="0.10"/><rect x="15" y="6" width="1" height="1" fill="#000" opacity="0.12"/><rect x="15" y="7" width="1" height="1" fill="#000" opacity="0.12"/><rect x="15" y="9" width="1" height="1" fill="#fff" opacity="0.10"/><rect x="15" y="10" width="1" height="1" fill="#fff" opacity="0.10"/><rect x="15" y="11" width="1" height="1" fill="#000" opacity="0.12"/><rect x="15" y="13" width="1" height="1" fill="#000" opacity="0.12"/><rect x="15" y="15" width="1" height="1" fill="#fff" opacity="0.10"/></g></svg><svg class="b" style="left:29.3px;top:213.3px" width="16" height="16" viewBox="0 0 16 16" preserveAspectRatio="none" shape-rendering="crispEdges"><filter id="si4" x="-10%" y="-10%" width="120%" height="120%"><feGaussianBlur stdDeviation="0.2"/></filter><g filter="url(#si4)"><rect x="10" y="2" width="2" height="1" fill="#5c5c5c"/><rect x="7" y="3" width="3" height="1" fill="#5c5c5c"/><rect x="10" y="3" width="2" height="1" fill="#a8a8a8"/><rect x="12" y="3" width="1" height="1" fill="#5c5c5c"/><rect x="4" y="4" width="3" height="1" fill="#5c5c5c"/><rect x="7" y="4" width="1" height="1" fill="#a8a8a8"/><rect x="8" y="4" width="1" height="1" fill="#ffffff"/><rect x="9" y="4" width="3" height="1" fill="#d8d8d8"/><rect x="12" y="4" width="1" height="1" fill="#a8a8a8"/><rect x="13" y="4" width="1" height="1" fill="#5c5c5c"/><rect x="1" y="5" width="3" height="1" fill="#5c5c5c"/><rect x="4" y="5" width="1" height="1" fill="#a8a8a8"/><rect x="5" y="5" width="2" height="1" fill="#ffffff"/><rect x="7" y="5" width="6" height="1" fill="#d8d8d8"/><rect x="13" y="5" width="1" height="1" fill="#a8a8a8"/><rect x="14" y="5" width="1" height="1" fill="#5c5c5c"/><rect x="0" y="6" width="1" height="1" fill="#5c5c5c"/><rect x="1" y="6" width="1" height="1" fill="#a8a8a8"/><rect x="2" y="6" width="3" height="1" fill="#ffffff"/><rect x="5" y="6" width="6" height="1" fill="#d8d8d8"/><rect x="11" y="6" width="4" height="1" fill="#727272"/><rect x="15" y="6" width="1" height="1" fill="#4c4c4c"/><rect x="0" y="7" width="1" height="1" fill="#5c5c5c"/><rect x="1" y="7" width="1" height="1" fill="#ffffff"/><rect x="2" y="7" width="1" height="1" fill="#828282"/><rect x="3" y="7" width="5" height="1" fill="#d8d8d8"/><rect x="8" y="7" width="3" height="1" fill="#727272"/><rect x="11" y="7" width="4" height="1" fill="#969696"/><rect x="15" y="7" width="1" height="1" fill="#4c4c4c"/><rect x="0" y="8" width="1" height="1" fill="#5c5c5c"/><rect x="1" y="8" width="1" height="1" fill="#ffffff"/><rect x="2" y="8" width="1" height="1" fill="#d8d8d8"/><rect x="3" y="8" width="1" height="1" fill="#828282"/><rect x="4" y="8" width="1" height="1" fill="#d8d8d8"/><rect x="5" y="8" width="3" height="1" fill="#727272"/><rect x="8" y="8" width="5" height="1" fill="#969696"/><rect x="13" y="8" width="2" height="1" fill="#7f7f7f"/><rect x="15" y="8" width="1" height="1" fill="#4c4c4c"/><rect x="0" y="9" width="1" height="1" fill="#5c5c5c"/><rect x="1" y="9" width="2" height="1" fill="#ffffff"/><rect x="3" y="9" width="1" height="1" fill="#a8a8a8"/><rect x="4" y="9" width="1" height="1" fill="#828282"/><rect x="5" y="9" width="5" height="1" fill="#969696"/><rect x="10" y="9" width="5" height="1" fill="#7f7f7f"/><rect x="15" y="9" width="1" height="1" fill="#4c4c4c"/><rect x="0" y="10" width="1" height="1" fill="#5c5c5c"/><rect x="1" y="10" width="2" height="1" fill="#969696"/><rect x="3" y="10" width="1" height="1" fill="#a8a8a8"/><rect x="4" y="10" width="1" height="1" fill="#828282"/><rect x="5" y="10" width="3" height="1" fill="#969696"/><rect x="8" y="10" width="4" height="1" fill="#7f7f7f"/><rect x="12" y="10" width="3" height="1" fill="#5c5c5c"/><rect x="1" y="11" width="1" height="1" fill="#5c5c5c"/><rect x="2" y="11" width="3" height="1" fill="#969696"/><rect x="5" y="11" width="4" height="1" fill="#7f7f7f"/><rect x="9" y="11" width="3" height="1" fill="#5c5c5c"/><rect x="2" y="12" width="1" height="1" fill="#5c5c5c"/><rect x="3" y="12" width="3" height="1" fill="#969696"/><rect x="6" y="12" width="3" height="1" fill="#5c5c5c"/><rect x="3" y="13" width="3" height="1" fill="#5c5c5c"/></g></svg><div class="t" style="left:48.5px;top:212px;font-size:16px;color:#fafaf9;-webkit-text-stroke:0.25px #fafaf9;letter-spacing:-0.65px">BLOG/IRON</div><div class="t" style="right:195.05px;top:212px;font-size:16px;letter-spacing:0.45px;color:#00c950">0.86</div><div class="t" style="right:104.55px;top:212px;font-size:16px;letter-spacing:0.45px;color:#00c950">-4.44%</div><div class="t" style="right:12.55px;top:212px;font-size:16px;letter-spacing:0.45px;color:#fafaf9"><span class="n1">1</span>4.252</div><div class="hl" style="left:0;top:241px;width:426px"></div><svg class="b" style="left:16px;top:253.3px" width="16" height="16" viewBox="0 0 16 16" preserveAspectRatio="none" shape-rendering="crispEdges"><filter id="sc5" x="-10%" y="-10%" width="120%" height="120%"><feGaussianBlur stdDeviation="0.3"/></filter><g filter="url(#sc5)"><rect x="6" y="2" width="3" height="1" fill="#151515"/><rect x="4" y="3" width="2" height="1" fill="#151515"/><rect x="6" y="3" width="3" height="1" fill="#232323"/><rect x="9" y="3" width="1" height="1" fill="#151515"/><rect x="3" y="4" width="1" height="1" fill="#151515"/><rect x="4" y="4" width="2" height="1" fill="#232323"/><rect x="6" y="4" width="1" height="1" fill="#303030"/><rect x="7" y="4" width="1" height="1" fill="#444444"/><rect x="8" y="4" width="2" height="1" fill="#232323"/><rect x="10" y="4" width="1" height="1" fill="#151515"/><rect x="3" y="5" width="1" height="1" fill="#151515"/><rect x="4" y="5" width="1" height="1" fill="#232323"/><rect x="5" y="5" width="1" height="1" fill="#303030"/><rect x="6" y="5" width="1" height="1" fill="#444444"/><rect x="7" y="5" width="1" height="1" fill="#232323"/><rect x="8" y="5" width="1" height="1" fill="#1d1d1d"/><rect x="9" y="5" width="2" height="1" fill="#232323"/><rect x="11" y="5" width="1" height="1" fill="#151515"/><rect x="2" y="6" width="1" height="1" fill="#151515"/><rect x="3" y="6" width="2" height="1" fill="#232323"/><rect x="5" y="6" width="1" height="1" fill="#444444"/><rect x="6" y="6" width="1" height="1" fill="#232323"/><rect x="7" y="6" width="3" height="1" fill="#1d1d1d"/><rect x="10" y="6" width="1" height="1" fill="#232323"/><rect x="11" y="6" width="1" height="1" fill="#151515"/><rect x="2" y="7" width="1" height="1" fill="#151515"/><rect x="3" y="7" width="2" height="1" fill="#232323"/><rect x="5" y="7" width="6" height="1" fill="#1d1d1d"/><rect x="11" y="7" width="1" height="1" fill="#232323"/><rect x="12" y="7" width="1" height="1" fill="#151515"/><rect x="2" y="8" width="1" height="1" fill="#151515"/><rect x="3" y="8" width="1" height="1" fill="#232323"/><rect x="4" y="8" width="4" height="1" fill="#1d1d1d"/><rect x="8" y="8" width="1" height="1" fill="#232323"/><rect x="9" y="8" width="3" height="1" fill="#1d1d1d"/><rect x="12" y="8" width="1" height="1" fill="#151515"/><rect x="2" y="9" width="1" height="1" fill="#151515"/><rect x="3" y="9" width="3" height="1" fill="#1d1d1d"/><rect x="6" y="9" width="1" height="1" fill="#232323"/><rect x="7" y="9" width="5" height="1" fill="#1d1d1d"/><rect x="12" y="9" width="1" height="1" fill="#151515"/><rect x="3" y="10" width="1" height="1" fill="#151515"/><rect x="4" y="10" width="7" height="1" fill="#1d1d1d"/><rect x="11" y="10" width="1" height="1" fill="#151515"/><rect x="4" y="11" width="2" height="1" fill="#151515"/><rect x="6" y="11" width="3" height="1" fill="#1d1d1d"/><rect x="9" y="11" width="2" height="1" fill="#151515"/><rect x="6" y="12" width="3" height="1" fill="#151515"/></g></svg><svg class="b" style="left:29.3px;top:253.3px" width="16" height="16" viewBox="0 0 16 16" preserveAspectRatio="none" shape-rendering="crispEdges"><filter id="si5" x="-10%" y="-10%" width="120%" height="120%"><feGaussianBlur stdDeviation="0.2"/></filter><g filter="url(#si5)"><rect x="10" y="2" width="2" height="1" fill="#5c5c5c"/><rect x="7" y="3" width="3" height="1" fill="#5c5c5c"/><rect x="10" y="3" width="2" height="1" fill="#a8a8a8"/><rect x="12" y="3" width="1" height="1" fill="#5c5c5c"/><rect x="4" y="4" width="3" height="1" fill="#5c5c5c"/><rect x="7" y="4" width="1" height="1" fill="#a8a8a8"/><rect x="8" y="4" width="1" height="1" fill="#ffffff"/><rect x="9" y="4" width="3" height="1" fill="#d8d8d8"/><rect x="12" y="4" width="1" height="1" fill="#a8a8a8"/><rect x="13" y="4" width="1" height="1" fill="#5c5c5c"/><rect x="1" y="5" width="3" height="1" fill="#5c5c5c"/><rect x="4" y="5" width="1" height="1" fill="#a8a8a8"/><rect x="5" y="5" width="2" height="1" fill="#ffffff"/><rect x="7" y="5" width="6" height="1" fill="#d8d8d8"/><rect x="13" y="5" width="1" height="1" fill="#a8a8a8"/><rect x="14" y="5" width="1" height="1" fill="#5c5c5c"/><rect x="0" y="6" width="1" height="1" fill="#5c5c5c"/><rect x="1" y="6" width="1" height="1" fill="#a8a8a8"/><rect x="2" y="6" width="3" height="1" fill="#ffffff"/><rect x="5" y="6" width="6" height="1" fill="#d8d8d8"/><rect x="11" y="6" width="4" height="1" fill="#727272"/><rect x="15" y="6" width="1" height="1" fill="#4c4c4c"/><rect x="0" y="7" width="1" height="1" fill="#5c5c5c"/><rect x="1" y="7" width="1" height="1" fill="#ffffff"/><rect x="2" y="7" width="1" height="1" fill="#828282"/><rect x="3" y="7" width="5" height="1" fill="#d8d8d8"/><rect x="8" y="7" width="3" height="1" fill="#727272"/><rect x="11" y="7" width="4" height="1" fill="#969696"/><rect x="15" y="7" width="1" height="1" fill="#4c4c4c"/><rect x="0" y="8" width="1" height="1" fill="#5c5c5c"/><rect x="1" y="8" width="1" height="1" fill="#ffffff"/><rect x="2" y="8" width="1" height="1" fill="#d8d8d8"/><rect x="3" y="8" width="1" height="1" fill="#828282"/><rect x="4" y="8" width="1" height="1" fill="#d8d8d8"/><rect x="5" y="8" width="3" height="1" fill="#727272"/><rect x="8" y="8" width="5" height="1" fill="#969696"/><rect x="13" y="8" width="2" height="1" fill="#7f7f7f"/><rect x="15" y="8" width="1" height="1" fill="#4c4c4c"/><rect x="0" y="9" width="1" height="1" fill="#5c5c5c"/><rect x="1" y="9" width="2" height="1" fill="#ffffff"/><rect x="3" y="9" width="1" height="1" fill="#a8a8a8"/><rect x="4" y="9" width="1" height="1" fill="#828282"/><rect x="5" y="9" width="5" height="1" fill="#969696"/><rect x="10" y="9" width="5" height="1" fill="#7f7f7f"/><rect x="15" y="9" width="1" height="1" fill="#4c4c4c"/><rect x="0" y="10" width="1" height="1" fill="#5c5c5c"/><rect x="1" y="10" width="2" height="1" fill="#969696"/><rect x="3" y="10" width="1" height="1" fill="#a8a8a8"/><rect x="4" y="10" width="1" height="1" fill="#828282"/><rect x="5" y="10" width="3" height="1" fill="#969696"/><rect x="8" y="10" width="4" height="1" fill="#7f7f7f"/><rect x="12" y="10" width="3" height="1" fill="#5c5c5c"/><rect x="1" y="11" width="1" height="1" fill="#5c5c5c"/><rect x="2" y="11" width="3" height="1" fill="#969696"/><rect x="5" y="11" width="4" height="1" fill="#7f7f7f"/><rect x="9" y="11" width="3" height="1" fill="#5c5c5c"/><rect x="2" y="12" width="1" height="1" fill="#5c5c5c"/><rect x="3" y="12" width="3" height="1" fill="#969696"/><rect x="6" y="12" width="3" height="1" fill="#5c5c5c"/><rect x="3" y="13" width="3" height="1" fill="#5c5c5c"/></g></svg><div class="t" style="left:48.5px;top:252px;font-size:16px;color:#fafaf9;-webkit-text-stroke:0.25px #fafaf9;letter-spacing:-0.46px">COAL/IRON</div><div class="t" style="right:195.05px;top:252px;font-size:16px;letter-spacing:0.45px;color:#00c950">0.55</div><div class="t" style="right:104.55px;top:252px;font-size:16px;letter-spacing:0.45px;color:#00c950">3.77%</div><div class="t" style="right:12.55px;top:252px;font-size:16px;letter-spacing:0.45px;color:#fafaf9">8.635</div><div class="hl" style="left:0;top:281px;width:426px"></div><svg class="b" style="left:15.5px;top:293.1px" width="16.5" height="16.5" viewBox="0 0 16 16" preserveAspectRatio="none"><polygon points="8,0.2 15.6,3.9 8,7.7 0.4,3.9" fill="#7e7e7e"/><polygon points="0.4,3.9 8,7.7 8,15.9 0.4,12.1" fill="#6a6a6a"/><polygon points="15.6,3.9 8,7.7 8,15.9 15.6,12.1" fill="#565656"/></svg><svg class="b" style="left:29.3px;top:293.3px" width="16" height="16" viewBox="0 0 16 16" preserveAspectRatio="none" shape-rendering="crispEdges"><filter id="si6" x="-10%" y="-10%" width="120%" height="120%"><feGaussianBlur stdDeviation="0.2"/></filter><g filter="url(#si6)"><rect x="10" y="2" width="2" height="1" fill="#5c5c5c"/><rect x="7" y="3" width="3" height="1" fill="#5c5c5c"/><rect x="10" y="3" width="2" height="1" fill="#a8a8a8"/><rect x="12" y="3" width="1" height="1" fill="#5c5c5c"/><rect x="4" y="4" width="3" height="1" fill="#5c5c5c"/><rect x="7" y="4" width="1" height="1" fill="#a8a8a8"/><rect x="8" y="4" width="1" height="1" fill="#ffffff"/><rect x="9" y="4" width="3" height="1" fill="#d8d8d8"/><rect x="12" y="4" width="1" height="1" fill="#a8a8a8"/><rect x="13" y="4" width="1" height="1" fill="#5c5c5c"/><rect x="1" y="5" width="3" height="1" fill="#5c5c5c"/><rect x="4" y="5" width="1" height="1" fill="#a8a8a8"/><rect x="5" y="5" width="2" height="1" fill="#ffffff"/><rect x="7" y="5" width="6" height="1" fill="#d8d8d8"/><rect x="13" y="5" width="1" height="1" fill="#a8a8a8"/><rect x="14" y="5" width="1" height="1" fill="#5c5c5c"/><rect x="0" y="6" width="1" height="1" fill="#5c5c5c"/><rect x="1" y="6" width="1" height="1" fill="#a8a8a8"/><rect x="2" y="6" width="3" height="1" fill="#ffffff"/><rect x="5" y="6" width="6" height="1" fill="#d8d8d8"/><rect x="11" y="6" width="4" height="1" fill="#727272"/><rect x="15" y="6" width="1" height="1" fill="#4c4c4c"/><rect x="0" y="7" width="1" height="1" fill="#5c5c5c"/><rect x="1" y="7" width="1" height="1" fill="#ffffff"/><rect x="2" y="7" width="1" height="1" fill="#828282"/><rect x="3" y="7" width="5" height="1" fill="#d8d8d8"/><rect x="8" y="7" width="3" height="1" fill="#727272"/><rect x="11" y="7" width="4" height="1" fill="#969696"/><rect x="15" y="7" width="1" height="1" fill="#4c4c4c"/><rect x="0" y="8" width="1" height="1" fill="#5c5c5c"/><rect x="1" y="8" width="1" height="1" fill="#ffffff"/><rect x="2" y="8" width="1" height="1" fill="#d8d8d8"/><rect x="3" y="8" width="1" height="1" fill="#828282"/><rect x="4" y="8" width="1" height="1" fill="#d8d8d8"/><rect x="5" y="8" width="3" height="1" fill="#727272"/><rect x="8" y="8" width="5" height="1" fill="#969696"/><rect x="13" y="8" width="2" height="1" fill="#7f7f7f"/><rect x="15" y="8" width="1" height="1" fill="#4c4c4c"/><rect x="0" y="9" width="1" height="1" fill="#5c5c5c"/><rect x="1" y="9" width="2" height="1" fill="#ffffff"/><rect x="3" y="9" width="1" height="1" fill="#a8a8a8"/><rect x="4" y="9" width="1" height="1" fill="#828282"/><rect x="5" y="9" width="5" height="1" fill="#969696"/><rect x="10" y="9" width="5" height="1" fill="#7f7f7f"/><rect x="15" y="9" width="1" height="1" fill="#4c4c4c"/><rect x="0" y="10" width="1" height="1" fill="#5c5c5c"/><rect x="1" y="10" width="2" height="1" fill="#969696"/><rect x="3" y="10" width="1" height="1" fill="#a8a8a8"/><rect x="4" y="10" width="1" height="1" fill="#828282"/><rect x="5" y="10" width="3" height="1" fill="#969696"/><rect x="8" y="10" width="4" height="1" fill="#7f7f7f"/><rect x="12" y="10" width="3" height="1" fill="#5c5c5c"/><rect x="1" y="11" width="1" height="1" fill="#5c5c5c"/><rect x="2" y="11" width="3" height="1" fill="#969696"/><rect x="5" y="11" width="4" height="1" fill="#7f7f7f"/><rect x="9" y="11" width="3" height="1" fill="#5c5c5c"/><rect x="2" y="12" width="1" height="1" fill="#5c5c5c"/><rect x="3" y="12" width="3" height="1" fill="#969696"/><rect x="6" y="12" width="3" height="1" fill="#5c5c5c"/><rect x="3" y="13" width="3" height="1" fill="#5c5c5c"/></g></svg><div class="t" style="left:48.5px;top:292px;font-size:16px;color:#fafaf9;-webkit-text-stroke:0.25px #fafaf9;letter-spacing:-0.43px">STON/IRON</div><div class="t" style="right:195.05px;top:292px;font-size:16px;letter-spacing:0.45px;color:#00c950">0.08</div><div class="t" style="right:104.55px;top:292px;font-size:16px;letter-spacing:0.45px;color:#00c950">0.00%</div><div class="t" style="right:12.55px;top:292px;font-size:16px;letter-spacing:0.45px;color:#fafaf9">42.<span class="n1">1</span>47</div><div class="hl" style="left:0;top:321px;width:426px"></div><svg class="b" style="left:15.5px;top:334.1px" width="16.5" height="16.5" viewBox="0 0 16 16" preserveAspectRatio="none"><polygon points="8,0.2 15.6,3.9 8,7.7 0.4,3.9" fill="#7c7c7c"/><polygon points="0.4,3.9 8,7.7 8,15.9 0.4,12.1" fill="#626262"/><polygon points="15.6,3.9 8,7.7 8,15.9 15.6,12.1" fill="#4e4e4e"/><defs><clipPath id="cc5t"><polygon points="8,0.2 15.6,3.9 8,7.7 0.4,3.9"/></clipPath><clipPath id="cc5l"><polygon points="0.4,3.9 8,7.7 8,15.9 0.4,12.1"/></clipPath><clipPath id="cc5r"><polygon points="15.6,3.9 8,7.7 8,15.9 15.6,12.1"/></clipPath></defs><g clip-path="url(#cc5t)"><rect x="0" y="3" width="1" height="1" fill="#000" opacity="0.2"/><rect x="0" y="7" width="1" height="1" fill="#000" opacity="0.2"/><rect x="1" y="5" width="1" height="1" fill="#fff" opacity="0.16"/><rect x="2" y="2" width="1" height="1" fill="#000" opacity="0.2"/><rect x="2" y="4" width="1" height="1" fill="#000" opacity="0.2"/><rect x="3" y="0" width="1" height="1" fill="#fff" opacity="0.16"/><rect x="3" y="2" width="1" height="1" fill="#000" opacity="0.2"/><rect x="3" y="6" width="1" height="1" fill="#fff" opacity="0.16"/><rect x="3" y="7" width="1" height="1" fill="#000" opacity="0.2"/><rect x="4" y="2" width="1" height="1" fill="#000" opacity="0.2"/><rect x="5" y="1" width="1" height="1" fill="#000" opacity="0.2"/><rect x="5" y="7" width="1" height="1" fill="#000" opacity="0.2"/><rect x="6" y="0" width="1" height="1" fill="#fff" opacity="0.16"/><rect x="6" y="2" width="1" height="1" fill="#fff" opacity="0.16"/><rect x="6" y="4" width="1" height="1" fill="#fff" opacity="0.16"/><rect x="6" y="5" width="1" height="1" fill="#000" opacity="0.2"/><rect x="7" y="0" width="1" height="1" fill="#fff" opacity="0.16"/><rect x="7" y="3" width="1" height="1" fill="#fff" opacity="0.16"/><rect x="7" y="4" width="1" height="1" fill="#fff" opacity="0.16"/><rect x="7" y="6" width="1" height="1" fill="#000" opacity="0.2"/><rect x="8" y="1" width="1" height="1" fill="#000" opacity="0.2"/><rect x="8" y="5" width="1" height="1" fill="#000" opacity="0.2"/><rect x="8" y="6" width="1" height="1" fill="#000" opacity="0.2"/><rect x="9" y="4" width="1" height="1" fill="#000" opacity="0.2"/><rect x="9" y="7" width="1" height="1" fill="#000" opacity="0.2"/><rect x="10" y="0" width="1" height="1" fill="#000" opacity="0.2"/><rect x="10" y="3" width="1" height="1" fill="#000" opacity="0.2"/><rect x="10" y="6" width="1" height="1" fill="#000" opacity="0.2"/><rect x="11" y="1" width="1" height="1" fill="#000" opacity="0.2"/><rect x="11" y="3" width="1" height="1" fill="#fff" opacity="0.16"/><rect x="11" y="4" width="1" height="1" fill="#000" opacity="0.2"/><rect x="12" y="6" width="1" height="1" fill="#000" opacity="0.2"/><rect x="13" y="4" width="1" height="1" fill="#000" opacity="0.2"/><rect x="14" y="1" width="1" height="1" fill="#000" opacity="0.2"/><rect x="14" y="2" width="1" height="1" fill="#000" opacity="0.2"/><rect x="14" y="6" width="1" height="1" fill="#000" opacity="0.2"/><rect x="15" y="5" width="1" height="1" fill="#000" opacity="0.2"/><rect x="15" y="6" width="1" height="1" fill="#fff" opacity="0.16"/></g><g clip-path="url(#cc5l)"><rect x="0" y="3" width="1" height="1" fill="#fff" opacity="0.16"/><rect x="0" y="7" width="1" height="1" fill="#000" opacity="0.2"/><rect x="0" y="8" width="1" height="1" fill="#fff" opacity="0.16"/><rect x="1" y="8" width="1" height="1" fill="#fff" opacity="0.16"/><rect x="1" y="10" width="1" height="1" fill="#fff" opacity="0.16"/><rect x="1" y="11" width="1" height="1" fill="#fff" opacity="0.16"/><rect x="1" y="13" width="1" height="1" fill="#fff" opacity="0.16"/><rect x="2" y="4" width="1" height="1" fill="#000" opacity="0.2"/><rect x="2" y="5" width="1" height="1" fill="#000" opacity="0.2"/><rect x="2" y="9" width="1" height="1" fill="#fff" opacity="0.16"/><rect x="2" y="12" width="1" height="1" fill="#000" opacity="0.2"/><rect x="2" y="13" width="1" height="1" fill="#000" opacity="0.2"/><rect x="3" y="3" width="1" height="1" fill="#fff" opacity="0.16"/><rect x="3" y="4" width="1" height="1" fill="#fff" opacity="0.16"/><rect x="3" y="5" width="1" height="1" fill="#000" opacity="0.2"/><rect x="3" y="6" width="1" height="1" fill="#000" opacity="0.2"/><rect x="3" y="7" width="1" height="1" fill="#fff" opacity="0.16"/><rect x="3" y="8" width="1" height="1" fill="#fff" opacity="0.16"/><rect x="3" y="10" width="1" height="1" fill="#000" opacity="0.2"/><rect x="3" y="11" width="1" height="1" fill="#fff" opacity="0.16"/><rect x="3" y="13" width="1" height="1" fill="#fff" opacity="0.16"/><rect x="4" y="3" width="1" height="1" fill="#fff" opacity="0.16"/><rect x="4" y="5" width="1" height="1" fill="#000" opacity="0.2"/><rect x="4" y="6" width="1" height="1" fill="#000" opacity="0.2"/><rect x="4" y="8" width="1" height="1" fill="#fff" opacity="0.16"/><rect x="4" y="9" width="1" height="1" fill="#fff" opacity="0.16"/><rect x="4" y="11" width="1" height="1" fill="#000" opacity="0.2"/><rect x="4" y="12" width="1" height="1" fill="#000" opacity="0.2"/><rect x="4" y="14" width="1" height="1" fill="#fff" opacity="0.16"/><rect x="4" y="15" width="1" height="1" fill="#000" opacity="0.2"/><rect x="5" y="4" width="1" height="1" fill="#fff" opacity="0.16"/><rect x="5" y="7" width="1" height="1" fill="#000" opacity="0.2"/><rect x="5" y="10" width="1" height="1" fill="#000" opacity="0.2"/><rect x="5" y="13" width="1" height="1" fill="#fff" opacity="0.16"/><rect x="6" y="5" width="1" height="1" fill="#fff" opacity="0.16"/><rect x="6" y="7" width="1" height="1" fill="#000" opacity="0.2"/><rect x="6" y="8" width="1" height="1" fill="#fff" opacity="0.16"/><rect x="6" y="10" width="1" height="1" fill="#000" opacity="0.2"/><rect x="6" y="12" width="1" height="1" fill="#fff" opacity="0.16"/><rect x="6" y="15" width="1" height="1" fill="#000" opacity="0.2"/><rect x="7" y="4" width="1" height="1" fill="#000" opacity="0.2"/><rect x="7" y="5" width="1" height="1" fill="#000" opacity="0.2"/><rect x="7" y="10" width="1" height="1" fill="#fff" opacity="0.16"/><rect x="7" y="11" width="1" height="1" fill="#fff" opacity="0.16"/><rect x="7" y="12" width="1" height="1" fill="#000" opacity="0.2"/><rect x="7" y="13" width="1" height="1" fill="#fff" opacity="0.16"/><rect x="8" y="3" width="1" height="1" fill="#fff" opacity="0.16"/><rect x="8" y="4" width="1" height="1" fill="#000" opacity="0.2"/><rect x="8" y="5" width="1" height="1" fill="#fff" opacity="0.16"/><rect x="8" y="7" width="1" height="1" fill="#fff" opacity="0.16"/><rect x="8" y="10" width="1" height="1" fill="#000" opacity="0.2"/><rect x="8" y="11" width="1" height="1" fill="#fff" opacity="0.16"/><rect x="8" y="15" width="1" height="1" fill="#fff" opacity="0.16"/></g><g clip-path="url(#cc5r)"><rect x="8" y="4" width="1" height="1" fill="#000" opacity="0.2"/><rect x="8" y="5" width="1" height="1" fill="#fff" opacity="0.16"/><rect x="8" y="7" width="1" height="1" fill="#000" opacity="0.2"/><rect x="8" y="8" width="1" height="1" fill="#000" opacity="0.2"/><rect x="8" y="9" width="1" height="1" fill="#fff" opacity="0.16"/><rect x="8" y="11" width="1" height="1" fill="#000" opacity="0.2"/><rect x="8" y="12" width="1" height="1" fill="#fff" opacity="0.16"/><rect x="8" y="13" width="1" height="1" fill="#000" opacity="0.2"/><rect x="8" y="14" width="1" height="1" fill="#000" opacity="0.2"/><rect x="9" y="3" width="1" height="1" fill="#000" opacity="0.2"/><rect x="9" y="4" width="1" height="1" fill="#fff" opacity="0.16"/><rect x="9" y="5" width="1" height="1" fill="#000" opacity="0.2"/><rect x="9" y="7" width="1" height="1" fill="#000" opacity="0.2"/><rect x="9" y="9" width="1" height="1" fill="#fff" opacity="0.16"/><rect x="9" y="10" width="1" height="1" fill="#000" opacity="0.2"/><rect x="9" y="11" width="1" height="1" fill="#fff" opacity="0.16"/><rect x="9" y="12" width="1" height="1" fill="#fff" opacity="0.16"/><rect x="9" y="13" width="1" height="1" fill="#fff" opacity="0.16"/><rect x="9" y="15" width="1" height="1" fill="#fff" opacity="0.16"/><rect x="10" y="4" width="1" height="1" fill="#fff" opacity="0.16"/><rect x="10" y="6" width="1" height="1" fill="#fff" opacity="0.16"/><rect x="10" y="7" width="1" height="1" fill="#000" opacity="0.2"/><rect x="10" y="8" width="1" height="1" fill="#fff" opacity="0.16"/><rect x="10" y="10" width="1" height="1" fill="#000" opacity="0.2"/><rect x="10" y="13" width="1" height="1" fill="#000" opacity="0.2"/><rect x="10" y="15" width="1" height="1" fill="#fff" opacity="0.16"/><rect x="11" y="3" width="1" height="1" fill="#000" opacity="0.2"/><rect x="11" y="5" width="1" height="1" fill="#000" opacity="0.2"/><rect x="11" y="6" width="1" height="1" fill="#fff" opacity="0.16"/><rect x="11" y="8" width="1" height="1" fill="#fff" opacity="0.16"/><rect x="11" y="10" width="1" height="1" fill="#fff" opacity="0.16"/><rect x="11" y="12" width="1" height="1" fill="#fff" opacity="0.16"/><rect x="11" y="15" width="1" height="1" fill="#fff" opacity="0.16"/><rect x="12" y="11" width="1" height="1" fill="#fff" opacity="0.16"/><rect x="12" y="14" width="1" height="1" fill="#000" opacity="0.2"/><rect x="13" y="5" width="1" height="1" fill="#000" opacity="0.2"/><rect x="13" y="6" width="1" height="1" fill="#fff" opacity="0.16"/><rect x="13" y="7" width="1" height="1" fill="#000" opacity="0.2"/><rect x="13" y="8" width="1" height="1" fill="#000" opacity="0.2"/><rect x="13" y="9" width="1" height="1" fill="#fff" opacity="0.16"/><rect x="13" y="10" width="1" height="1" fill="#fff" opacity="0.16"/><rect x="13" y="12" width="1" height="1" fill="#000" opacity="0.2"/><rect x="14" y="6" width="1" height="1" fill="#000" opacity="0.2"/><rect x="14" y="11" width="1" height="1" fill="#fff" opacity="0.16"/><rect x="14" y="12" width="1" height="1" fill="#000" opacity="0.2"/><rect x="15" y="3" width="1" height="1" fill="#000" opacity="0.2"/><rect x="15" y="5" width="1" height="1" fill="#fff" opacity="0.16"/><rect x="15" y="6" width="1" height="1" fill="#fff" opacity="0.16"/><rect x="15" y="7" width="1" height="1" fill="#fff" opacity="0.16"/><rect x="15" y="8" width="1" height="1" fill="#fff" opacity="0.16"/><rect x="15" y="10" width="1" height="1" fill="#fff" opacity="0.16"/><rect x="15" y="12" width="1" height="1" fill="#fff" opacity="0.16"/><rect x="15" y="13" width="1" height="1" fill="#fff" opacity="0.16"/><rect x="15" y="14" width="1" height="1" fill="#000" opacity="0.2"/><rect x="15" y="15" width="1" height="1" fill="#000" opacity="0.2"/></g></svg><svg class="b" style="left:29.3px;top:334.3px" width="16" height="16" viewBox="0 0 16 16" preserveAspectRatio="none" shape-rendering="crispEdges"><filter id="si7" x="-10%" y="-10%" width="120%" height="120%"><feGaussianBlur stdDeviation="0.2"/></filter><g filter="url(#si7)"><rect x="10" y="2" width="2" height="1" fill="#5c5c5c"/><rect x="7" y="3" width="3" height="1" fill="#5c5c5c"/><rect x="10" y="3" width="2" height="1" fill="#a8a8a8"/><rect x="12" y="3" width="1" height="1" fill="#5c5c5c"/><rect x="4" y="4" width="3" height="1" fill="#5c5c5c"/><rect x="7" y="4" width="1" height="1" fill="#a8a8a8"/><rect x="8" y="4" width="1" height="1" fill="#ffffff"/><rect x="9" y="4" width="3" height="1" fill="#d8d8d8"/><rect x="12" y="4" width="1" height="1" fill="#a8a8a8"/><rect x="13" y="4" width="1" height="1" fill="#5c5c5c"/><rect x="1" y="5" width="3" height="1" fill="#5c5c5c"/><rect x="4" y="5" width="1" height="1" fill="#a8a8a8"/><rect x="5" y="5" width="2" height="1" fill="#ffffff"/><rect x="7" y="5" width="6" height="1" fill="#d8d8d8"/><rect x="13" y="5" width="1" height="1" fill="#a8a8a8"/><rect x="14" y="5" width="1" height="1" fill="#5c5c5c"/><rect x="0" y="6" width="1" height="1" fill="#5c5c5c"/><rect x="1" y="6" width="1" height="1" fill="#a8a8a8"/><rect x="2" y="6" width="3" height="1" fill="#ffffff"/><rect x="5" y="6" width="6" height="1" fill="#d8d8d8"/><rect x="11" y="6" width="4" height="1" fill="#727272"/><rect x="15" y="6" width="1" height="1" fill="#4c4c4c"/><rect x="0" y="7" width="1" height="1" fill="#5c5c5c"/><rect x="1" y="7" width="1" height="1" fill="#ffffff"/><rect x="2" y="7" width="1" height="1" fill="#828282"/><rect x="3" y="7" width="5" height="1" fill="#d8d8d8"/><rect x="8" y="7" width="3" height="1" fill="#727272"/><rect x="11" y="7" width="4" height="1" fill="#969696"/><rect x="15" y="7" width="1" height="1" fill="#4c4c4c"/><rect x="0" y="8" width="1" height="1" fill="#5c5c5c"/><rect x="1" y="8" width="1" height="1" fill="#ffffff"/><rect x="2" y="8" width="1" height="1" fill="#d8d8d8"/><rect x="3" y="8" width="1" height="1" fill="#828282"/><rect x="4" y="8" width="1" height="1" fill="#d8d8d8"/><rect x="5" y="8" width="3" height="1" fill="#727272"/><rect x="8" y="8" width="5" height="1" fill="#969696"/><rect x="13" y="8" width="2" height="1" fill="#7f7f7f"/><rect x="15" y="8" width="1" height="1" fill="#4c4c4c"/><rect x="0" y="9" width="1" height="1" fill="#5c5c5c"/><rect x="1" y="9" width="2" height="1" fill="#ffffff"/><rect x="3" y="9" width="1" height="1" fill="#a8a8a8"/><rect x="4" y="9" width="1" height="1" fill="#828282"/><rect x="5" y="9" width="5" height="1" fill="#969696"/><rect x="10" y="9" width="5" height="1" fill="#7f7f7f"/><rect x="15" y="9" width="1" height="1" fill="#4c4c4c"/><rect x="0" y="10" width="1" height="1" fill="#5c5c5c"/><rect x="1" y="10" width="2" height="1" fill="#969696"/><rect x="3" y="10" width="1" height="1" fill="#a8a8a8"/><rect x="4" y="10" width="1" height="1" fill="#828282"/><rect x="5" y="10" width="3" height="1" fill="#969696"/><rect x="8" y="10" width="4" height="1" fill="#7f7f7f"/><rect x="12" y="10" width="3" height="1" fill="#5c5c5c"/><rect x="1" y="11" width="1" height="1" fill="#5c5c5c"/><rect x="2" y="11" width="3" height="1" fill="#969696"/><rect x="5" y="11" width="4" height="1" fill="#7f7f7f"/><rect x="9" y="11" width="3" height="1" fill="#5c5c5c"/><rect x="2" y="12" width="1" height="1" fill="#5c5c5c"/><rect x="3" y="12" width="3" height="1" fill="#969696"/><rect x="6" y="12" width="3" height="1" fill="#5c5c5c"/><rect x="3" y="13" width="3" height="1" fill="#5c5c5c"/></g></svg><div class="t" style="left:48.5px;top:333px;font-size:16px;color:#fafaf9;-webkit-text-stroke:0.25px #fafaf9;letter-spacing:-0.46px">COBL/IRON</div><div class="t" style="right:195.05px;top:333px;font-size:16px;letter-spacing:0.45px;color:#00c950">0.06</div><div class="t" style="right:104.55px;top:333px;font-size:16px;letter-spacing:0.45px;color:#00c950">0.00%</div><div class="t" style="right:12.55px;top:333px;font-size:16px;letter-spacing:0.45px;color:#fafaf9"><span class="n1">1</span>0.072</div><div class="hl" style="left:0;top:361px;width:426px"></div><svg class="b" style="left:15.5px;top:374.1px" width="16.5" height="16.5" viewBox="0 0 16 16" preserveAspectRatio="none"><polygon points="8,0.2 15.6,3.9 8,7.7 0.4,3.9" fill="#ded6a6"/><polygon points="0.4,3.9 8,7.7 8,15.9 0.4,12.1" fill="#b3aa7e"/><polygon points="15.6,3.9 8,7.7 8,15.9 15.6,12.1" fill="#9f976f"/></svg><svg class="b" style="left:29.3px;top:374.3px" width="16" height="16" viewBox="0 0 16 16" preserveAspectRatio="none" shape-rendering="crispEdges"><filter id="si8" x="-10%" y="-10%" width="120%" height="120%"><feGaussianBlur stdDeviation="0.2"/></filter><g filter="url(#si8)"><rect x="10" y="2" width="2" height="1" fill="#5c5c5c"/><rect x="7" y="3" width="3" height="1" fill="#5c5c5c"/><rect x="10" y="3" width="2" height="1" fill="#a8a8a8"/><rect x="12" y="3" width="1" height="1" fill="#5c5c5c"/><rect x="4" y="4" width="3" height="1" fill="#5c5c5c"/><rect x="7" y="4" width="1" height="1" fill="#a8a8a8"/><rect x="8" y="4" width="1" height="1" fill="#ffffff"/><rect x="9" y="4" width="3" height="1" fill="#d8d8d8"/><rect x="12" y="4" width="1" height="1" fill="#a8a8a8"/><rect x="13" y="4" width="1" height="1" fill="#5c5c5c"/><rect x="1" y="5" width="3" height="1" fill="#5c5c5c"/><rect x="4" y="5" width="1" height="1" fill="#a8a8a8"/><rect x="5" y="5" width="2" height="1" fill="#ffffff"/><rect x="7" y="5" width="6" height="1" fill="#d8d8d8"/><rect x="13" y="5" width="1" height="1" fill="#a8a8a8"/><rect x="14" y="5" width="1" height="1" fill="#5c5c5c"/><rect x="0" y="6" width="1" height="1" fill="#5c5c5c"/><rect x="1" y="6" width="1" height="1" fill="#a8a8a8"/><rect x="2" y="6" width="3" height="1" fill="#ffffff"/><rect x="5" y="6" width="6" height="1" fill="#d8d8d8"/><rect x="11" y="6" width="4" height="1" fill="#727272"/><rect x="15" y="6" width="1" height="1" fill="#4c4c4c"/><rect x="0" y="7" width="1" height="1" fill="#5c5c5c"/><rect x="1" y="7" width="1" height="1" fill="#ffffff"/><rect x="2" y="7" width="1" height="1" fill="#828282"/><rect x="3" y="7" width="5" height="1" fill="#d8d8d8"/><rect x="8" y="7" width="3" height="1" fill="#727272"/><rect x="11" y="7" width="4" height="1" fill="#969696"/><rect x="15" y="7" width="1" height="1" fill="#4c4c4c"/><rect x="0" y="8" width="1" height="1" fill="#5c5c5c"/><rect x="1" y="8" width="1" height="1" fill="#ffffff"/><rect x="2" y="8" width="1" height="1" fill="#d8d8d8"/><rect x="3" y="8" width="1" height="1" fill="#828282"/><rect x="4" y="8" width="1" height="1" fill="#d8d8d8"/><rect x="5" y="8" width="3" height="1" fill="#727272"/><rect x="8" y="8" width="5" height="1" fill="#969696"/><rect x="13" y="8" width="2" height="1" fill="#7f7f7f"/><rect x="15" y="8" width="1" height="1" fill="#4c4c4c"/><rect x="0" y="9" width="1" height="1" fill="#5c5c5c"/><rect x="1" y="9" width="2" height="1" fill="#ffffff"/><rect x="3" y="9" width="1" height="1" fill="#a8a8a8"/><rect x="4" y="9" width="1" height="1" fill="#828282"/><rect x="5" y="9" width="5" height="1" fill="#969696"/><rect x="10" y="9" width="5" height="1" fill="#7f7f7f"/><rect x="15" y="9" width="1" height="1" fill="#4c4c4c"/><rect x="0" y="10" width="1" height="1" fill="#5c5c5c"/><rect x="1" y="10" width="2" height="1" fill="#969696"/><rect x="3" y="10" width="1" height="1" fill="#a8a8a8"/><rect x="4" y="10" width="1" height="1" fill="#828282"/><rect x="5" y="10" width="3" height="1" fill="#969696"/><rect x="8" y="10" width="4" height="1" fill="#7f7f7f"/><rect x="12" y="10" width="3" height="1" fill="#5c5c5c"/><rect x="1" y="11" width="1" height="1" fill="#5c5c5c"/><rect x="2" y="11" width="3" height="1" fill="#969696"/><rect x="5" y="11" width="4" height="1" fill="#7f7f7f"/><rect x="9" y="11" width="3" height="1" fill="#5c5c5c"/><rect x="2" y="12" width="1" height="1" fill="#5c5c5c"/><rect x="3" y="12" width="3" height="1" fill="#969696"/><rect x="6" y="12" width="3" height="1" fill="#5c5c5c"/><rect x="3" y="13" width="3" height="1" fill="#5c5c5c"/></g></svg><div class="t" style="left:48.5px;top:373px;font-size:16px;color:#fafaf9;-webkit-text-stroke:0.25px #fafaf9;letter-spacing:-0.47px">SAND/IRON</div><div class="t" style="right:196.35000000000002px;top:373px;font-size:16px;letter-spacing:0.45px;color:#00c950">0.0<span class="n1">1</span></div><div class="t" style="right:104.55px;top:373px;font-size:16px;letter-spacing:0.45px;color:#00c950">0.00%</div><div class="t" style="right:12.55px;top:373px;font-size:16px;letter-spacing:0.45px;color:#fafaf9">0.000</div><div class="hl" style="left:0;top:402px;width:426px"></div><svg class="b" style="left:15.5px;top:414.1px" width="16.5" height="16.5" viewBox="0 0 16 16" preserveAspectRatio="none"><polygon points="8,0.2 15.6,3.9 8,7.7 0.4,3.9" fill="#f2f2f2"/><polygon points="0.4,3.9 8,7.7 8,15.9 0.4,12.1" fill="#cfcfcf"/><polygon points="15.6,3.9 8,7.7 8,15.9 15.6,12.1" fill="#bdbdbd"/></svg><svg class="b" style="left:29.3px;top:414.3px" width="16" height="16" viewBox="0 0 16 16" preserveAspectRatio="none" shape-rendering="crispEdges"><filter id="si9" x="-10%" y="-10%" width="120%" height="120%"><feGaussianBlur stdDeviation="0.2"/></filter><g filter="url(#si9)"><rect x="10" y="2" width="2" height="1" fill="#5c5c5c"/><rect x="7" y="3" width="3" height="1" fill="#5c5c5c"/><rect x="10" y="3" width="2" height="1" fill="#a8a8a8"/><rect x="12" y="3" width="1" height="1" fill="#5c5c5c"/><rect x="4" y="4" width="3" height="1" fill="#5c5c5c"/><rect x="7" y="4" width="1" height="1" fill="#a8a8a8"/><rect x="8" y="4" width="1" height="1" fill="#ffffff"/><rect x="9" y="4" width="3" height="1" fill="#d8d8d8"/><rect x="12" y="4" width="1" height="1" fill="#a8a8a8"/><rect x="13" y="4" width="1" height="1" fill="#5c5c5c"/><rect x="1" y="5" width="3" height="1" fill="#5c5c5c"/><rect x="4" y="5" width="1" height="1" fill="#a8a8a8"/><rect x="5" y="5" width="2" height="1" fill="#ffffff"/><rect x="7" y="5" width="6" height="1" fill="#d8d8d8"/><rect x="13" y="5" width="1" height="1" fill="#a8a8a8"/><rect x="14" y="5" width="1" height="1" fill="#5c5c5c"/><rect x="0" y="6" width="1" height="1" fill="#5c5c5c"/><rect x="1" y="6" width="1" height="1" fill="#a8a8a8"/><rect x="2" y="6" width="3" height="1" fill="#ffffff"/><rect x="5" y="6" width="6" height="1" fill="#d8d8d8"/><rect x="11" y="6" width="4" height="1" fill="#727272"/><rect x="15" y="6" width="1" height="1" fill="#4c4c4c"/><rect x="0" y="7" width="1" height="1" fill="#5c5c5c"/><rect x="1" y="7" width="1" height="1" fill="#ffffff"/><rect x="2" y="7" width="1" height="1" fill="#828282"/><rect x="3" y="7" width="5" height="1" fill="#d8d8d8"/><rect x="8" y="7" width="3" height="1" fill="#727272"/><rect x="11" y="7" width="4" height="1" fill="#969696"/><rect x="15" y="7" width="1" height="1" fill="#4c4c4c"/><rect x="0" y="8" width="1" height="1" fill="#5c5c5c"/><rect x="1" y="8" width="1" height="1" fill="#ffffff"/><rect x="2" y="8" width="1" height="1" fill="#d8d8d8"/><rect x="3" y="8" width="1" height="1" fill="#828282"/><rect x="4" y="8" width="1" height="1" fill="#d8d8d8"/><rect x="5" y="8" width="3" height="1" fill="#727272"/><rect x="8" y="8" width="5" height="1" fill="#969696"/><rect x="13" y="8" width="2" height="1" fill="#7f7f7f"/><rect x="15" y="8" width="1" height="1" fill="#4c4c4c"/><rect x="0" y="9" width="1" height="1" fill="#5c5c5c"/><rect x="1" y="9" width="2" height="1" fill="#ffffff"/><rect x="3" y="9" width="1" height="1" fill="#a8a8a8"/><rect x="4" y="9" width="1" height="1" fill="#828282"/><rect x="5" y="9" width="5" height="1" fill="#969696"/><rect x="10" y="9" width="5" height="1" fill="#7f7f7f"/><rect x="15" y="9" width="1" height="1" fill="#4c4c4c"/><rect x="0" y="10" width="1" height="1" fill="#5c5c5c"/><rect x="1" y="10" width="2" height="1" fill="#969696"/><rect x="3" y="10" width="1" height="1" fill="#a8a8a8"/><rect x="4" y="10" width="1" height="1" fill="#828282"/><rect x="5" y="10" width="3" height="1" fill="#969696"/><rect x="8" y="10" width="4" height="1" fill="#7f7f7f"/><rect x="12" y="10" width="3" height="1" fill="#5c5c5c"/><rect x="1" y="11" width="1" height="1" fill="#5c5c5c"/><rect x="2" y="11" width="3" height="1" fill="#969696"/><rect x="5" y="11" width="4" height="1" fill="#7f7f7f"/><rect x="9" y="11" width="3" height="1" fill="#5c5c5c"/><rect x="2" y="12" width="1" height="1" fill="#5c5c5c"/><rect x="3" y="12" width="3" height="1" fill="#969696"/><rect x="6" y="12" width="3" height="1" fill="#5c5c5c"/><rect x="3" y="13" width="3" height="1" fill="#5c5c5c"/></g></svg><div class="t" style="left:48.5px;top:413px;font-size:16px;color:#fafaf9;-webkit-text-stroke:0.25px #fafaf9;letter-spacing:-0.7px">WOOL/IRON</div><div class="t" style="right:196.35000000000002px;top:413px;font-size:16px;letter-spacing:0.45px;color:#00c950">0.2<span class="n1">1</span></div><div class="t" style="right:104.55px;top:413px;font-size:16px;letter-spacing:0.45px;color:#00c950">-<span class="n1">1</span>.23%</div><div class="t" style="right:12.55px;top:413px;font-size:16px;letter-spacing:0.45px;color:#fafaf9"><span class="n1">1</span>2.543</div></div><div class="t" style="top:576px;font-size:16px;color:#a6a09b;left:1300px;">Price (IRON)</div><div class="t" style="top:576px;font-size:16px;color:#a6a09b;right:158.5px;">Qty (DIAM)</div><div class="t" style="top:576px;font-size:16px;color:#a6a09b;right:25px;">Time</div><div class="hl" style="left:1287px;top:606px;width:426px"></div><div class="t" style="top:612px;font-size:16px;color:#00c950;left:1304.5px;letter-spacing:0.45px;">44.55</div><div class="t" style="top:612px;font-size:16px;color:#fafaf9;right:159.05px;letter-spacing:0.45px;">0.02</div><div class="t" style="top:612px;font-size:16px;color:#b9b4af;right:28.55px;letter-spacing:0.45px;">09:<span class="n1">1</span>8:54</div><div class="hl" style="left:1287px;top:637px;width:426px"></div><div class="t" style="top:644px;font-size:16px;color:#00c950;left:1304.5px;letter-spacing:0.45px;">44.62</div><div class="t" style="top:644px;font-size:16px;color:#fafaf9;right:159.05px;letter-spacing:0.45px;">0.04</div><div class="t" style="top:644px;font-size:16px;color:#b9b4af;right:28.55px;letter-spacing:0.45px;">09:<span class="n1">1</span>7:33</div><div class="hl" style="left:1287px;top:669px;width:426px"></div><div class="t" style="top:675px;font-size:16px;color:#00c950;left:1304.5px;letter-spacing:0.45px;">44.77</div><div class="t" style="top:675px;font-size:16px;color:#fafaf9;right:159.05px;letter-spacing:0.45px;">0.04</div><div class="t" style="top:675px;font-size:16px;color:#b9b4af;right:28.55px;letter-spacing:0.45px;">09:<span class="n1">1</span>6:<span class="n1">1</span>9</div><div class="hl" style="left:1287px;top:700px;width:426px"></div><div class="t" style="top:707px;font-size:16px;color:#00c950;left:1304.5px;letter-spacing:0.45px;">45.00</div><div class="t" style="top:707px;font-size:16px;color:#fafaf9;right:159.05px;letter-spacing:0.45px;">0.04</div><div class="t" style="top:707px;font-size:16px;color:#b9b4af;right:28.55px;letter-spacing:0.45px;">09:<span class="n1">1</span>5:06</div><div class="hl" style="left:1287px;top:732px;width:426px"></div><div class="t" style="top:738px;font-size:16px;color:#00c950;left:1304.5px;letter-spacing:0.45px;">45.02</div><div class="t" style="top:738px;font-size:16px;color:#fafaf9;right:159.05px;letter-spacing:0.45px;">0.02</div><div class="t" style="top:738px;font-size:16px;color:#b9b4af;right:28.55px;letter-spacing:0.45px;">09:<span class="n1">1</span>3:34</div><div class="hl" style="left:1287px;top:763px;width:426px"></div><div class="t" style="top:770px;font-size:16px;color:#00c950;left:1304.5px;letter-spacing:0.45px;">45.<span class="n1">1</span><span class="n1">1</span></div><div class="t" style="top:770px;font-size:16px;color:#fafaf9;right:159.05px;letter-spacing:0.45px;">0.07</div><div class="t" style="top:770px;font-size:16px;color:#b9b4af;right:29.85px;letter-spacing:0.45px;">09:<span class="n1">1</span><span class="n1">1</span>:2<span class="n1">1</span></div><div class="hl" style="left:1287px;top:795px;width:426px"></div><div class="t" style="top:801px;font-size:16px;color:#00c950;left:1304.5px;letter-spacing:0.45px;">45.3<span class="n1">1</span></div><div class="t" style="top:801px;font-size:16px;color:#fafaf9;right:159.05px;letter-spacing:0.45px;">0.04</div><div class="t" style="top:801px;font-size:16px;color:#b9b4af;right:28.55px;letter-spacing:0.45px;">09:09:<span class="n1">1</span>8</div><div class="hl" style="left:1287px;top:827px;width:426px"></div><div class="t" style="top:833px;font-size:16px;color:#00c950;left:1304.5px;letter-spacing:0.45px;">45.<span class="n1">1</span><span class="n1">1</span></div><div class="t" style="top:833px;font-size:16px;color:#fafaf9;right:159.05px;letter-spacing:0.45px;">0.07</div><div class="t" style="top:833px;font-size:16px;color:#b9b4af;right:28.55px;letter-spacing:0.45px;">09:07:58</div><div class="hl" style="left:1287px;top:858px;width:426px"></div><div class="t" style="top:865px;font-size:16px;color:#00c950;left:1304.5px;letter-spacing:0.45px;">45.<span class="n1">1</span>8</div><div class="t" style="top:865px;font-size:16px;color:#fafaf9;right:159.05px;letter-spacing:0.45px;">0.06</div><div class="t" style="top:865px;font-size:16px;color:#b9b4af;right:28.55px;letter-spacing:0.45px;">09:06:28</div><div class="hl" style="left:1287px;top:890px;width:426px"></div><div class="t" style="top:896px;font-size:16px;color:#00c950;left:1304.5px;letter-spacing:0.45px;">44.99</div><div class="t" style="top:896px;font-size:16px;color:#fafaf9;right:159.05px;letter-spacing:0.45px;">0.09</div><div class="t" style="top:896px;font-size:16px;color:#b9b4af;right:28.55px;letter-spacing:0.45px;">09:04:58</div><div class="hl" style="left:1287px;top:921px;width:426px"></div><div class="t" style="top:928px;font-size:16px;color:#00c950;left:1304.5px;letter-spacing:0.45px;">45.<span class="n1">1</span>9</div><div class="t" style="top:928px;font-size:16px;color:#fafaf9;right:160.35px;letter-spacing:0.45px;">0.0<span class="n1">1</span></div><div class="t" style="top:928px;font-size:16px;color:#b9b4af;right:28.55px;letter-spacing:0.45px;">09:02:54</div><div class="hl" style="left:1287px;top:953px;width:424px"></div></body></html>
